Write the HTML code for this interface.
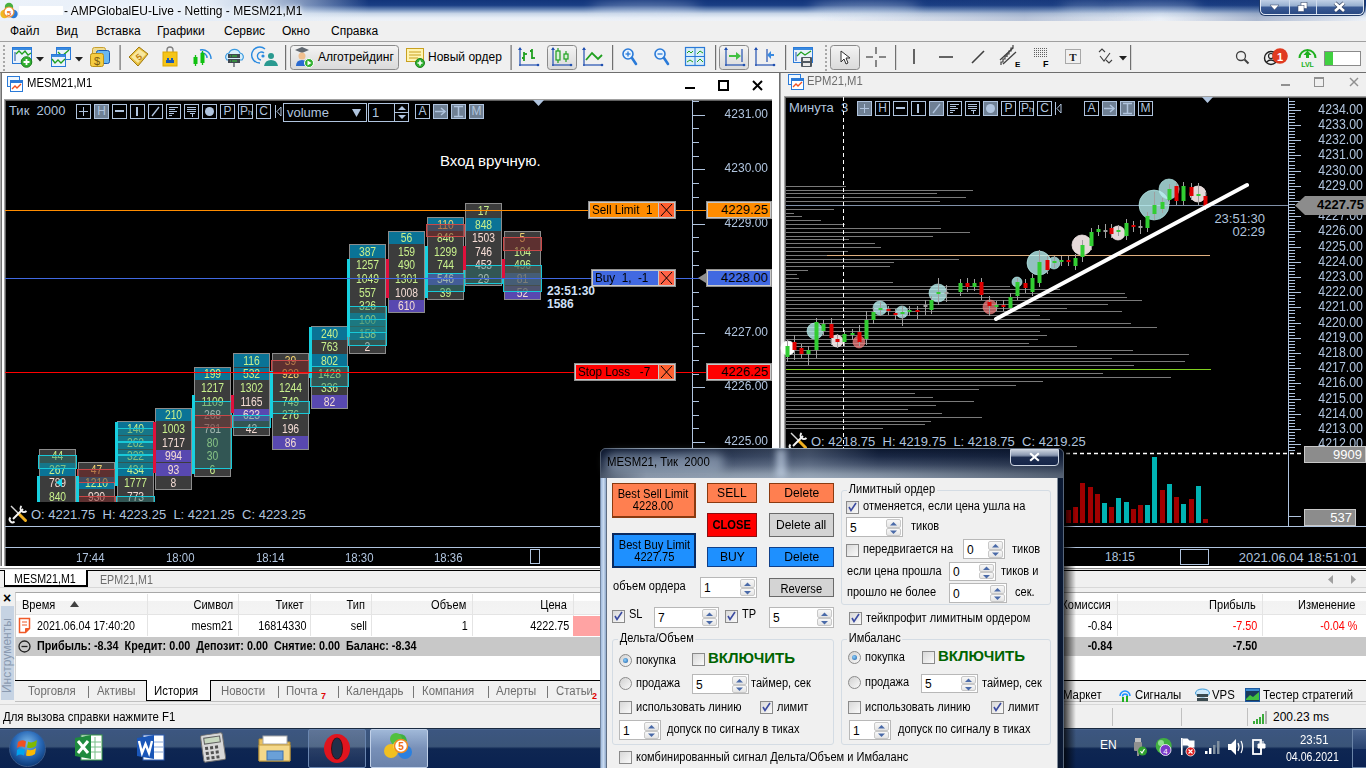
<!DOCTYPE html><html><head><meta charset="utf-8"><style>
html,body{margin:0;padding:0;width:1366px;height:768px;overflow:hidden;background:#f0f0f0;}
body{font-family:"Liberation Sans", sans-serif;font-size:12px;color:#000;position:relative;}
div{box-sizing:border-box;} svg{overflow:visible}
</style></head><body>
<div style="position:absolute;left:0px;top:0px;width:1366px;height:21px;background:linear-gradient(180deg,#12347a 0%,#1a3e84 25%,#6a88b8 45%,#c8d6e8 65%,#e8eef6 85%,#eef2f8 100%);"></div>
<div style="position:absolute;left:0px;top:0px;width:1366px;height:21px;background:linear-gradient(90deg,rgba(236,242,250,1) 0%,rgba(230,238,248,1) 15%,rgba(225,235,246,0.85) 19%,rgba(220,230,245,0.0) 27%,rgba(220,230,245,0) 100%);"></div>
<div style="position:absolute;left:0px;top:0px;width:1366px;height:21px;background:linear-gradient(90deg,rgba(0,0,0,0) 60%,rgba(40,70,130,0.25) 75%,rgba(0,0,0,0) 85%,rgba(30,60,120,0.3) 92%,rgba(0,0,0,0) 100%);"></div>
<div style="position:absolute;left:590px;top:2px;width:110px;height:14px;background:rgba(225,235,248,0.35);filter:blur(6px);border-radius:50%"></div>
<div style="position:absolute;left:810px;top:2px;width:110px;height:14px;background:rgba(225,235,248,0.4);filter:blur(6px);border-radius:50%"></div>
<div style="position:absolute;left:1060px;top:2px;width:60px;height:14px;background:rgba(225,235,248,0.25);filter:blur(6px);border-radius:50%"></div>
<div style="position:absolute;left:1110px;top:2px;width:90px;height:14px;background:rgba(225,235,248,0.35);filter:blur(6px);border-radius:50%"></div>
<div style="position:absolute;left:19px;top:6px;width:44px;height:9px;background:#fff;"></div>
<div style="position:absolute;left:64px;top:3px;white-space:nowrap;font-size:13px;color:#000;transform:scaleX(0.922);transform-origin:0 0;text-shadow:0 0 8px #fff,0 0 4px #fff;;">- AMPGlobalEU-Live - Netting - MESM21,M1</div>
<svg style="position:absolute;left:0px;top:2px;" width="19" height="18" viewBox="0 0 19 18"><circle cx="9" cy="5" r="4.2" fill="#48b040"/><circle cx="4.5" cy="12" r="4.2" fill="#f0b820"/><circle cx="13.5" cy="12" r="4.2" fill="#2a7ad8"/><circle cx="9" cy="10" r="5" fill="#fff" stroke="#f09030" stroke-width="1.2"/><text x="9" y="13.5" font-size="8" font-weight="bold" fill="#f07020" text-anchor="middle" font-family="Liberation Sans">5</text></svg>
<div style="position:absolute;left:1260px;top:-2px;width:104px;height:17px;background:linear-gradient(180deg,#c8d6ea 0%,#98b0d0 45%,#3a5a94 55%,#2a4a84 100%);border:1px solid #e0e8f4;border-radius:0 0 5px 5px;box-shadow:0 0 0 1px #203a68;"></div>
<div style="position:absolute;left:1289px;top:0px;width:1px;height:14px;background:#d0dcec"></div>
<div style="position:absolute;left:1316px;top:0px;width:1px;height:14px;background:#d0dcec"></div>
<svg style="position:absolute;left:1260px;top:0px;" width="104" height="15" viewBox="0 0 104 15"><polygon points="10,5 19,5 14.5,10" fill="#fff" stroke="#304060" stroke-width="0.5"/><rect x="41" y="2.5" width="6" height="6" fill="#fff" stroke="#304060" stroke-width="0.5"/><rect x="38" y="5.5" width="6" height="6" fill="#fff" stroke="#304060" stroke-width="0.5"/><g stroke="#304060" stroke-width="4"><line x1="75" y1="3" x2="84" y2="11"/><line x1="84" y1="3" x2="75" y2="11"/></g><g stroke="#fff" stroke-width="2.6"><line x1="75" y1="3" x2="84" y2="11"/><line x1="84" y1="3" x2="75" y2="11"/></g></svg>
<div style="position:absolute;left:0px;top:21px;width:1366px;height:20px;background:#f0f0f0;"></div>
<div style="position:absolute;left:10px;top:24px;white-space:nowrap;font-size:12px;;">Файл</div>
<div style="position:absolute;left:56px;top:24px;white-space:nowrap;font-size:12px;;">Вид</div>
<div style="position:absolute;left:96px;top:24px;white-space:nowrap;font-size:12px;;">Вставка</div>
<div style="position:absolute;left:157px;top:24px;white-space:nowrap;font-size:12px;;">Графики</div>
<div style="position:absolute;left:224px;top:24px;white-space:nowrap;font-size:12px;;">Сервис</div>
<div style="position:absolute;left:282px;top:24px;white-space:nowrap;font-size:12px;;">Окно</div>
<div style="position:absolute;left:331px;top:24px;white-space:nowrap;font-size:12px;;">Справка</div>
<div style="position:absolute;left:0px;top:41px;width:1366px;height:1px;background:#a0a0a0;"></div>
<div style="position:absolute;left:0px;top:42px;width:1366px;height:30px;background:#f0f0f0;"></div>
<div style="position:absolute;left:0px;top:72px;width:1366px;height:1px;background:#6e6e6e;"></div>
<div style="position:absolute;left:0px;top:73px;width:780px;height:496px;background:#fff;border-left:2px solid #a8a8a8;border-right:1px solid #707070;"></div>
<div style="position:absolute;left:1px;top:73px;width:1px;height:496px;background:#707070"></div>
<div style="position:absolute;left:4px;top:99px;width:768px;height:467px;background:#a0a0a0;"></div>
<div style="position:absolute;left:5px;top:100px;width:767px;height:466px;background:#606060;"></div>
<div style="position:absolute;left:6px;top:101px;width:766px;height:465px;background:#000;"></div>
<svg style="position:absolute;left:7px;top:76px;" width="16" height="16" viewBox="0 0 16 16"><rect x="0.5" y="0.5" width="12" height="10" fill="#f0f8ff" stroke="#2a7ad8"/><rect x="3.5" y="4.5" width="12" height="11" fill="#fff" stroke="#2a7ad8"/><rect x="4" y="5" width="11" height="2" fill="#2a7ad8"/><polyline points="5,13 8,10 10,12 14,8" fill="none" stroke="#f05020" stroke-width="1.3"/></svg>
<div style="position:absolute;left:27px;top:76px;white-space:nowrap;font-size:12px;;transform:scaleX(0.94);transform-origin:0 0;">MESM21,M1</div>
<div style="position:absolute;left:685px;top:87px;width:10px;height:2px;background:#000"></div>
<div style="position:absolute;left:718px;top:80px;width:11px;height:11px;border:2px solid #000;border-top-width:2px;"></div>
<svg style="position:absolute;left:752px;top:80px;" width="11" height="11" viewBox="0 0 11 11"><g stroke="#000" stroke-width="2"><line x1="1" y1="1" x2="10" y2="10"/><line x1="10" y1="1" x2="1" y2="10"/></g></svg>
<div style="position:absolute;left:780px;top:73px;width:586px;height:496px;background:#f0f0f0;border-left:1px solid #a0a0a0;"></div>
<div style="position:absolute;left:784px;top:96px;width:582px;height:470px;background:#a0a0a0;"></div>
<div style="position:absolute;left:785px;top:97px;width:581px;height:469px;background:#606060;"></div>
<div style="position:absolute;left:786px;top:98px;width:580px;height:468px;background:#000;"></div>
<svg style="position:absolute;left:788px;top:74px;" width="16" height="16" viewBox="0 0 16 16"><rect x="0.5" y="0.5" width="12" height="10" fill="#f0f8ff" stroke="#2a7ad8"/><rect x="3.5" y="4.5" width="12" height="11" fill="#fff" stroke="#2a7ad8"/><rect x="4" y="5" width="11" height="2" fill="#2a7ad8"/><polyline points="5,13 8,10 10,12 14,8" fill="none" stroke="#f05020" stroke-width="1.3"/></svg>
<div style="position:absolute;left:807px;top:74px;white-space:nowrap;font-size:12px;color:#6d6d6d;;transform:scaleX(0.94);transform-origin:0 0;">EPM21,M1</div>
<div style="position:absolute;left:1281px;top:84px;width:9px;height:2px;background:#909090"></div>
<div style="position:absolute;left:1314px;top:77px;width:10px;height:10px;border:1px solid #909090;border-top-width:2px;"></div>
<svg style="position:absolute;left:1349px;top:77px;" width="10" height="10" viewBox="0 0 10 10"><g stroke="#909090" stroke-width="1.5"><line x1="1" y1="1" x2="9" y2="9"/><line x1="9" y1="1" x2="1" y2="9"/></g></svg>
<svg style="position:absolute;left:0;top:0" width="1366" height="768"><defs><linearGradient id="gbtn" x1="0" y1="0" x2="0" y2="1"><stop offset="0" stop-color="#f4f4f4"/><stop offset="0.5" stop-color="#e6e6e6"/><stop offset="1" stop-color="#dadada"/></linearGradient></defs><rect x="3" y="45" width="2" height="2" fill="#a8a8a8"/><rect x="3" y="49" width="2" height="2" fill="#a8a8a8"/><rect x="3" y="53" width="2" height="2" fill="#a8a8a8"/><rect x="3" y="57" width="2" height="2" fill="#a8a8a8"/><rect x="3" y="61" width="2" height="2" fill="#a8a8a8"/><rect x="3" y="65" width="2" height="2" fill="#a8a8a8"/><rect x="3" y="69" width="2" height="2" fill="#a8a8a8"/><rect x="825" y="45" width="2" height="2" fill="#a8a8a8"/><rect x="825" y="49" width="2" height="2" fill="#a8a8a8"/><rect x="825" y="53" width="2" height="2" fill="#a8a8a8"/><rect x="825" y="57" width="2" height="2" fill="#a8a8a8"/><rect x="825" y="61" width="2" height="2" fill="#a8a8a8"/><rect x="825" y="65" width="2" height="2" fill="#a8a8a8"/><rect x="825" y="69" width="2" height="2" fill="#a8a8a8"/><rect x="119.5" y="45" width="1.2" height="25" fill="#707070"/><rect x="285" y="45" width="1.2" height="25" fill="#707070"/><rect x="510.5" y="45" width="1.2" height="25" fill="#707070"/><rect x="612" y="45" width="1.2" height="25" fill="#707070"/><rect x="715" y="45" width="1.2" height="25" fill="#707070"/><rect x="785" y="45" width="1.2" height="25" fill="#707070"/><rect x="895" y="45" width="1.2" height="25" fill="#707070"/><rect x="1130" y="45" width="1.2" height="25" fill="#707070"/><rect x="12.5" y="47.5" width="19" height="16" fill="#eaf2fb" stroke="#2a7ad8"/><rect x="13" y="48" width="18" height="2" fill="#3a8ae0"/><polyline points="16,54 19,51 22,54 25,51 28,55 31,53" fill="none" stroke="#20a020" stroke-width="1.3"/><line x1="15" y1="52" x2="15" y2="61" stroke="#2050a0"/><circle cx="26.5" cy="62" r="5.3" fill="#30b030" stroke="#208020"/><path d="M26.5,59 v6 M23.5,62 h6" stroke="#fff" stroke-width="1.8"/><polygon points="36,57 44,57 40,61.5" fill="#202020"/><rect x="56.5" y="47.5" width="14" height="12" fill="#eaf2fb" stroke="#2a7ad8"/><rect x="57" y="48" width="13" height="2" fill="#3a8ae0"/><polyline points="58,52 62,56 69,50" fill="none" stroke="#20a020" stroke-width="1.3"/><rect x="51.5" y="54.5" width="14" height="12" fill="#eaf2fb" stroke="#2a7ad8"/><rect x="52" y="55" width="13" height="2" fill="#3a8ae0"/><polyline points="52,59 55,63 58,60 61,63 65,59" fill="none" stroke="#20a020" stroke-width="1.3"/><polygon points="75,57 83,57 79,61.5" fill="#202020"/><rect x="92.5" y="47.5" width="13" height="10" rx="2" fill="#f0dc90" stroke="#c8a030"/><rect x="96.5" y="50.5" width="13" height="13" rx="2" fill="#6ab8f0" stroke="#1a5ab0"/><rect x="90.5" y="53.5" width="13" height="13" rx="2" fill="#f5cc40" stroke="#b8901a"/><text x="97" y="64.5" font-size="11" fill="#7a5a10" text-anchor="middle" font-family="Liberation Sans">$</text><path d="M129,57 L139,47 L148,54 L138,66 z" fill="#e8c040" stroke="#a07a10"/><path d="M131,57 L139,49 L146,54 L138,63 z" fill="#f8e8a0"/><text x="139" y="60" font-size="9" font-weight="bold" fill="#c08010" text-anchor="middle" font-family="Liberation Sans" transform="rotate(-40 139 57)">5</text><path d="M167,53 v-3 a3,3 0 0 1 6,0 v3" fill="none" stroke="#808080" stroke-width="1.3"/><rect x="163" y="52" width="14" height="14" fill="#f5c518" stroke="#e0a800"/><rect x="166" y="60" width="8" height="3" fill="#1a5ab8"/><rect x="167" y="58" width="2" height="2" fill="#1a5ab8"/><rect x="171" y="58" width="2" height="2" fill="#1a5ab8"/><g fill="none" stroke="#2a8ae0" stroke-width="1.4"><path d="M200,50 a9,9 0 0 1 11,9"/><path d="M201,53 a5,5 0 0 1 6,5"/></g><rect x="193.5" y="57" width="4" height="7" fill="#10c010"/><line x1="195.5" y1="55" x2="195.5" y2="66" stroke="#10c010" stroke-width="1.3"/><rect x="200.5" y="53" width="4" height="10" fill="#10c010"/><line x1="202.5" y1="51" x2="202.5" y2="65" stroke="#10c010" stroke-width="1.3"/><path d="M227,60 a4,4 0 0 1 2,-7 a6,6 0 0 1 11,0 a4,4 0 0 1 2,7 z" fill="#d8eefa" stroke="#3a9ae0" stroke-width="1.2"/><rect x="228" y="54" width="12" height="4" fill="#404850"/><rect x="228" y="59" width="12" height="4" fill="#404850"/><rect x="230" y="55.5" width="1" height="1" fill="#30d030"/><rect x="232" y="55.5" width="5" height="1" fill="#30d030"/><rect x="230" y="60.5" width="1" height="1" fill="#30d030"/><rect x="232" y="60.5" width="5" height="1" fill="#30d030"/><line x1="234" y1="63" x2="234" y2="67" stroke="#404850" stroke-width="1.2"/><g fill="none" stroke="#2a8ae0" stroke-width="1.4"><path d="M265,49 a8,8 0 1 0 -5,14"/><path d="M264,53 a4,4 0 1 0 -3,7"/></g><circle cx="263" cy="56" r="1.6" fill="#2a8ae0"/><circle cx="271" cy="56" r="3" fill="#2a9a90"/><path d="M264,66 q1,-6 7,-6 q6,0 7,6 z" fill="#2a9a90"/><rect x="290.5" y="45.5" width="108" height="24" rx="3" fill="url(#gbtn)" stroke="#8a8a8a"/><path d="M295,50 l7,-3 l7,3 l-7,3 z" fill="#606870"/><circle cx="302" cy="56" r="3.5" fill="#f0c090"/><path d="M296,66 q0,-6 6,-6 q6,0 6,6 z" fill="#2a6ad0"/><circle cx="309" cy="63" r="4.5" fill="#30b030" stroke="#fff" stroke-width="1"/><polygon points="307.5,60.5 307.5,65.5 311.5,63" fill="#fff"/><rect x="406.5" y="48.5" width="17" height="13" fill="#fff4b0" stroke="#c8a020"/><g stroke="#c8a020"><line x1="409" y1="52" x2="421" y2="52"/><line x1="409" y1="55" x2="421" y2="55"/><line x1="409" y1="58" x2="418" y2="58"/></g><circle cx="420" cy="63" r="4.5" fill="#30b030" stroke="#208020"/><path d="M420,60.5 v5 M417.5,63 h5" stroke="#fff" stroke-width="1.6"/><g stroke="#2050b0" stroke-width="1.2"><line x1="520" y1="48" x2="520" y2="66"/><line x1="519" y1="65" x2="538" y2="65"/></g><polygon points="518,50 520,47 522,50" fill="#2050b0"/><circle cx="538" cy="65" r="1.3" fill="#2050b0"/><g stroke="#20a020" stroke-width="1.8"><line x1="524" y1="52" x2="524" y2="61"/><line x1="522" y1="58" x2="524" y2="58"/><line x1="524" y1="54" x2="527" y2="54"/><line x1="532" y1="49" x2="532" y2="59"/><line x1="530" y1="51" x2="532" y2="51"/><line x1="532" y1="58" x2="535" y2="58"/></g><rect x="547.5" y="45.5" width="29" height="24" rx="3" fill="url(#gbtn)" stroke="#8a8a8a"/><g stroke="#2050b0" stroke-width="1.2"><line x1="553" y1="48" x2="553" y2="66"/><line x1="552" y1="65" x2="571" y2="65"/></g><polygon points="551,50 553,47 555,50" fill="#2050b0"/><circle cx="571" cy="65" r="1.3" fill="#2050b0"/><g stroke="#20a020" stroke-width="1.2" fill="none"><line x1="558" y1="48" x2="558" y2="63"/><rect x="556" y="51" width="4" height="9" fill="#d8f0d8"/><line x1="566" y1="51" x2="566" y2="62"/><rect x="564" y="54" width="4" height="5" fill="#d8f0d8"/></g><g stroke="#2050b0" stroke-width="1.2"><line x1="584" y1="48" x2="584" y2="66"/><line x1="583" y1="65" x2="602" y2="65"/></g><polygon points="582,50 584,47 586,50" fill="#2050b0"/><circle cx="602" cy="65" r="1.3" fill="#2050b0"/><polyline points="586,60 592,53 598,59 602,55" fill="none" stroke="#20a020" stroke-width="1.8"/><circle cx="628" cy="54" r="5" fill="#e8f4ff" stroke="#2a7ad8" stroke-width="1.6"/><line x1="632" y1="58" x2="636" y2="64" stroke="#2a7ad8" stroke-width="2.6" stroke-linecap="round"/><line x1="625.5" y1="54" x2="630.5" y2="54" stroke="#2a7ad8" stroke-width="1.3"/><line x1="628" y1="51.5" x2="628" y2="56.5" stroke="#2a7ad8" stroke-width="1.3"/><circle cx="660" cy="54" r="5" fill="#e8f4ff" stroke="#2a7ad8" stroke-width="1.6"/><line x1="664" y1="58" x2="668" y2="64" stroke="#2a7ad8" stroke-width="2.6" stroke-linecap="round"/><line x1="657.5" y1="54" x2="662.5" y2="54" stroke="#2a7ad8" stroke-width="1.3"/><rect x="685.5" y="47.5" width="19" height="18" fill="#d8eef8" stroke="#2a7ad8" stroke-width="1.2"/><line x1="695" y1="47" x2="695" y2="66" stroke="#2a7ad8"/><line x1="685" y1="56.5" x2="705" y2="56.5" stroke="#2a7ad8"/><g fill="none" stroke="#20a020"><polyline points="687,53 689,51 691,53 693,51"/><polyline points="697,54 700,51 703,53"/><polyline points="687,62 690,60 693,62"/><polyline points="697,62 700,59 703,62"/></g><rect x="719.5" y="45.5" width="29" height="24" rx="3" fill="url(#gbtn)" stroke="#8a8a8a"/><g stroke="#2050b0" stroke-width="1.2"><line x1="726" y1="48" x2="726" y2="66"/><line x1="725" y1="65" x2="744" y2="65"/></g><polygon points="724,50 726,47 728,50" fill="#2050b0"/><circle cx="744" cy="65" r="1.3" fill="#2050b0"/><line x1="742" y1="49" x2="742" y2="62" stroke="#2050b0" stroke-width="1.2"/><path d="M729,55 h7 v-3 l5,4 l-5,4 v-3 h-7z" fill="#40c040"/><g stroke="#2050b0" stroke-width="1.2"><line x1="756" y1="48" x2="756" y2="66"/><line x1="755" y1="65" x2="774" y2="65"/></g><polygon points="754,50 756,47 758,50" fill="#2050b0"/><circle cx="774" cy="65" r="1.3" fill="#2050b0"/><line x1="767" y1="49" x2="767" y2="62" stroke="#2050b0" stroke-width="1.2"/><path d="M774,54 h-3 v-3 l-4,4 l4,4 v-3 h3z" fill="#3a8ae0"/><rect x="793.5" y="47.5" width="19" height="15" fill="#eaf2fb" stroke="#2a7ad8"/><rect x="794" y="48" width="18" height="2" fill="#3a8ae0"/><polyline points="797,56 801,52 805,55 811,51" fill="none" stroke="#20a020" stroke-width="1.3"/><line x1="796" y1="52" x2="796" y2="61" stroke="#2050b0"/><rect x="801" y="57" width="11" height="10" rx="1" fill="#505860"/><rect x="803" y="58" width="7" height="3" fill="#e8e8e8"/><rect x="803" y="63" width="7" height="3" fill="#e8e8e8"/><rect x="830.5" y="45.5" width="29" height="24" rx="3" fill="url(#gbtn)" stroke="#8a8a8a"/><path d="M841,51 L841,62 L844,59 L846,64 L848,63 L846,58 L850,58 z" fill="#fff" stroke="#303030" stroke-width="1"/><g stroke="#404040" stroke-width="1.2"><line x1="866" y1="57" x2="873" y2="57"/><line x1="879" y1="57" x2="886" y2="57"/><line x1="876" y1="47" x2="876" y2="54"/><line x1="876" y1="60" x2="876" y2="67"/></g><line x1="914" y1="49" x2="914" y2="64" stroke="#404040" stroke-width="1.6"/><line x1="939" y1="57" x2="953" y2="57" stroke="#404040" stroke-width="1.6"/><line x1="972" y1="63" x2="984" y2="51" stroke="#404040" stroke-width="1.6"/><g stroke="#404040" stroke-width="1.2" fill="none"><path d="M1001,65 v-3 h2 v-3 h2 v-3 h2"/><path d="M1007,57 v-3 h2 v-3 h2 v-3 h2 v-3"/><line x1="1000" y1="60" x2="1013" y2="48"/><line x1="1003" y1="64" x2="1016" y2="52"/></g><text x="1015" y="67" font-size="8" font-weight="bold" fill="#000" font-family="Liberation Sans">E</text><g fill="#606060"><rect x="1034" y="48" width="1" height="1"/><rect x="1034" y="50" width="1" height="1"/><rect x="1034" y="52" width="1" height="1"/><rect x="1034" y="54" width="1" height="1"/><rect x="1034" y="56" width="1" height="1"/><rect x="1036" y="48" width="1" height="1"/><rect x="1036" y="50" width="1" height="1"/><rect x="1036" y="52" width="1" height="1"/><rect x="1036" y="54" width="1" height="1"/><rect x="1036" y="56" width="1" height="1"/><rect x="1038" y="48" width="1" height="1"/><rect x="1038" y="50" width="1" height="1"/><rect x="1038" y="52" width="1" height="1"/><rect x="1038" y="54" width="1" height="1"/><rect x="1038" y="56" width="1" height="1"/><rect x="1040" y="48" width="1" height="1"/><rect x="1040" y="50" width="1" height="1"/><rect x="1040" y="52" width="1" height="1"/><rect x="1040" y="54" width="1" height="1"/><rect x="1040" y="56" width="1" height="1"/><rect x="1042" y="48" width="1" height="1"/><rect x="1042" y="50" width="1" height="1"/><rect x="1042" y="52" width="1" height="1"/><rect x="1042" y="54" width="1" height="1"/><rect x="1042" y="56" width="1" height="1"/><rect x="1044" y="48" width="1" height="1"/><rect x="1044" y="50" width="1" height="1"/><rect x="1044" y="52" width="1" height="1"/><rect x="1044" y="54" width="1" height="1"/><rect x="1044" y="56" width="1" height="1"/><rect x="1046" y="48" width="1" height="1"/><rect x="1046" y="50" width="1" height="1"/><rect x="1046" y="52" width="1" height="1"/><rect x="1046" y="54" width="1" height="1"/><rect x="1046" y="56" width="1" height="1"/></g><text x="1043" y="67" font-size="9" font-weight="bold" fill="#000" font-family="Liberation Sans">F</text><rect x="1065.5" y="49.5" width="15" height="14" fill="none" stroke="#606060" stroke-dasharray="1,1"/><text x="1073" y="61" font-size="11" font-weight="bold" fill="#202020" text-anchor="middle" font-family="Liberation Serif">T</text><g stroke="#404040" stroke-width="1.1" fill="none"><polyline points="1099,52 1102,49 1105,52"/><polyline points="1100,56 1104,61 1110,53"/><polyline points="1106,60 1109,63 1112,60"/></g><polygon points="1119,56 1127,56 1123,60.5" fill="#202020"/><circle cx="1241" cy="56" r="4.5" fill="none" stroke="#404040" stroke-width="1.3"/><line x1="1244.5" y1="59.5" x2="1248.5" y2="63.5" stroke="#404040" stroke-width="2"/><circle cx="1271" cy="58" r="6.5" fill="none" stroke="#202020" stroke-width="1.4"/><circle cx="1271" cy="56" r="2.5" fill="none" stroke="#202020" stroke-width="1.2"/><path d="M1266.5,62 q4.5,-4 9,0" fill="none" stroke="#202020" stroke-width="1.2"/><circle cx="1280" cy="56" r="7.8" fill="#e03a20"/><text x="1280" y="60.5" font-size="11" font-weight="bold" fill="#fff" text-anchor="middle" font-family="Liberation Sans">1</text><path d="M1299.5,58 a8,8 0 0 1 16,0" fill="none" stroke="#20b020" stroke-width="2"/><polygon points="1303.5,55 1307.5,50.5 1311.5,55" fill="#20b020"/><rect x="1306" y="54" width="3" height="4" fill="#20b020"/><text x="1307.5" y="66.5" font-size="7" font-weight="bold" fill="#20b020" text-anchor="middle" font-family="Liberation Sans">LVL</text><rect x="1324.5" y="51.5" width="36" height="14" fill="#fff" stroke="#8a8a8a"/><rect x="1325" y="52" width="8" height="13" fill="#40d040"/></svg>
<div style="position:absolute;left:318px;top:50px;white-space:nowrap;font-size:12px;;">Алготрейдинг</div>
<div style="position:absolute;left:428px;top:50px;white-space:nowrap;font-size:12px;;">Новый ордер</div>
<div style="position:absolute;left:9px;top:103px;white-space:nowrap;font-size:13px;color:#b0c4de;;">Тик&nbsp; 2000</div>
<div style="position:absolute;left:76px;top:104px;width:15px;height:15px;border:1px solid #b0c4de;"><div style="position:absolute;left:2px;top:6px;width:9px;height:1px;background:#b0c4de"></div><div style="position:absolute;left:6px;top:2px;width:1px;height:9px;background:#b0c4de"></div></div>
<div style="position:absolute;left:94px;top:104px;width:15px;height:15px;border:1px solid #b0c4de;background:#6f8094;"><div style="position:absolute;left:0;top:-1px;width:13px;text-align:center;font-size:12px;line-height:15px;color:#b0c4de">H</div></div>
<div style="position:absolute;left:112px;top:104px;width:15px;height:15px;border:1px solid #b0c4de;"><div style="position:absolute;left:2px;top:5px;width:9px;height:2px;background:#b0c4de"></div></div>
<div style="position:absolute;left:130px;top:104px;width:15px;height:15px;border:1px solid #b0c4de;"><div style="position:absolute;left:5px;top:2px;width:2px;height:9px;background:#b0c4de"></div></div>
<div style="position:absolute;left:148px;top:104px;width:15px;height:15px;border:1px solid #b0c4de;"><svg width="13" height="13" style="position:absolute;left:0;top:0"><line x1="3" y1="11" x2="10" y2="2" stroke="#b0c4de" stroke-width="1.3"/></svg></div>
<div style="position:absolute;left:166px;top:104px;width:15px;height:15px;border:1px solid #b0c4de;"><svg width="13" height="13" style="position:absolute;left:0;top:0"><g stroke="#b0c4de" stroke-width="1"><line x1="2" y1="2.5" x2="11" y2="2.5"/><line x1="2" y1="4.5" x2="8" y2="4.5"/><line x1="2" y1="6.5" x2="10" y2="6.5"/><line x1="2" y1="8.5" x2="7" y2="8.5"/><line x1="2" y1="10.5" x2="5" y2="10.5"/></g></svg></div>
<div style="position:absolute;left:184px;top:104px;width:15px;height:15px;border:1px solid #b0c4de;"><svg width="13" height="13" style="position:absolute;left:0;top:0"><g stroke="#b0c4de" stroke-width="1"><line x1="2" y1="2.5" x2="11" y2="2.5"/><line x1="2" y1="4.5" x2="11" y2="4.5"/><line x1="2" y1="6.5" x2="11" y2="6.5"/><line x1="5" y1="8.5" x2="10" y2="8.5"/><line x1="7.5" y1="8" x2="7.5" y2="12"/></g></svg></div>
<div style="position:absolute;left:202px;top:104px;width:15px;height:15px;border:1px solid #b0c4de;"><div style="position:absolute;left:2px;top:2px;width:9px;height:9px;border-radius:50%;background:#b0c4de"></div></div>
<div style="position:absolute;left:220px;top:104px;width:15px;height:15px;border:1px solid #b0c4de;"><div style="position:absolute;left:0;top:-1px;width:13px;text-align:center;font-size:12px;line-height:15px;color:#b0c4de">P</div></div>
<div style="position:absolute;left:238px;top:104px;width:15px;height:15px;border:1px solid #b0c4de;"><div style="position:absolute;left:1px;top:-1px;font-size:12px;line-height:15px;color:#b0c4de">P<span style="font-size:8px">h</span></div></div>
<div style="position:absolute;left:256px;top:104px;width:15px;height:15px;border:1px solid #b0c4de;"><div style="position:absolute;left:0;top:-1px;width:13px;text-align:center;font-size:12px;line-height:15px;color:#b0c4de">C</div></div>
<div style="position:absolute;left:275px;top:105px;width:1px;height:13px;background:#b0c4de"></div>
<svg style="position:absolute;left:277px;top:107px;" width="5" height="9" viewBox="0 0 5 9"><polygon points="4,0 4,9 0,4.5" fill="none" stroke="#b0c4de"/></svg>
<div style="position:absolute;left:283px;top:103px;width:84px;height:19px;border:1px solid #b0c4de;"><div style="position:absolute;left:3px;top:1px;font-size:13px;color:#b0c4de">volume</div><svg width="10" height="8" style="position:absolute;left:68px;top:5px"><polygon points="0,0 9,0 4.5,8" fill="#b0c4de"/></svg></div>
<div style="position:absolute;left:368px;top:103px;width:41px;height:19px;border:1px solid #b0c4de;"><div style="position:absolute;left:3px;top:1px;font-size:13px;color:#b0c4de">1</div><div style="position:absolute;left:25px;top:0;width:1px;height:17px;background:#b0c4de"></div><div style="position:absolute;left:26px;top:8px;width:14px;height:1px;background:#b0c4de"></div><svg width="14" height="17" style="position:absolute;left:26px;top:0"><polygon points="3,6 7,2 11,6" fill="#b0c4de"/><polygon points="3,11 7,15 11,11" fill="#b0c4de"/></svg></div>
<div style="position:absolute;left:415px;top:104px;width:15px;height:15px;border:1px solid #b0c4de;"><div style="position:absolute;left:0;top:-1px;width:13px;text-align:center;font-size:12px;line-height:15px;color:#b0c4de">A</div></div>
<div style="position:absolute;left:433px;top:104px;width:15px;height:15px;border:1px solid #b0c4de;background:#6f8094;"><svg width="13" height="13" style="position:absolute;left:0;top:0"><g stroke="#b0c4de" stroke-width="1.5" fill="none"><line x1="1" y1="6.5" x2="11" y2="6.5"/><polyline points="7,3 11,6.5 7,10"/></g></svg></div>
<div style="position:absolute;left:451px;top:104px;width:15px;height:15px;border:1px solid #b0c4de;background:#6f8094;"><svg width="13" height="13" style="position:absolute;left:0;top:0"><g stroke="#b0c4de" stroke-width="1.5" fill="none"><line x1="2" y1="1.5" x2="11" y2="1.5"/><line x1="2" y1="11.5" x2="11" y2="11.5"/><line x1="6.5" y1="1" x2="6.5" y2="12"/></g></svg></div>
<div style="position:absolute;left:469px;top:104px;width:15px;height:15px;border:1px solid #b0c4de;background:#6f8094;"><div style="position:absolute;left:0;top:-1px;width:13px;text-align:center;font-size:12px;line-height:15px;color:#b0c4de">M</div></div>
<svg style="position:absolute;left:533px;top:100px;" width="11" height="6" viewBox="0 0 11 6"><polygon points="0,0 11,0 5.5,6" fill="#b0c4de"/></svg>
<div style="position:absolute;left:692px;top:100px;width:1px;height:447px;background:#b0c4de"></div>
<div style="position:absolute;left:693px;top:101px;width:6px;height:1px;background:#b0c4de"></div>
<div style="position:absolute;left:693px;top:115px;width:12px;height:1px;background:#b0c4de"></div>
<div style="position:absolute;right:598px;top:107px;white-space:nowrap;font-size:12px;color:#b0c4de;transform:scaleY(1.1);;">4231.00</div>
<div style="position:absolute;left:693px;top:128px;width:6px;height:1px;background:#b0c4de"></div>
<div style="position:absolute;left:693px;top:142px;width:6px;height:1px;background:#b0c4de"></div>
<div style="position:absolute;left:693px;top:156px;width:6px;height:1px;background:#b0c4de"></div>
<div style="position:absolute;left:693px;top:169px;width:12px;height:1px;background:#b0c4de"></div>
<div style="position:absolute;right:598px;top:161px;white-space:nowrap;font-size:12px;color:#b0c4de;transform:scaleY(1.1);;">4230.00</div>
<div style="position:absolute;left:693px;top:183px;width:6px;height:1px;background:#b0c4de"></div>
<div style="position:absolute;left:693px;top:197px;width:6px;height:1px;background:#b0c4de"></div>
<div style="position:absolute;left:693px;top:210px;width:6px;height:1px;background:#b0c4de"></div>
<div style="position:absolute;left:693px;top:224px;width:12px;height:1px;background:#b0c4de"></div>
<div style="position:absolute;right:598px;top:216px;white-space:nowrap;font-size:12px;color:#b0c4de;transform:scaleY(1.1);;">4229.00</div>
<div style="position:absolute;left:693px;top:237px;width:6px;height:1px;background:#b0c4de"></div>
<div style="position:absolute;left:693px;top:251px;width:6px;height:1px;background:#b0c4de"></div>
<div style="position:absolute;left:693px;top:265px;width:6px;height:1px;background:#b0c4de"></div>
<div style="position:absolute;left:693px;top:278px;width:12px;height:1px;background:#b0c4de"></div>
<div style="position:absolute;right:598px;top:270px;white-space:nowrap;font-size:12px;color:#b0c4de;transform:scaleY(1.1);;">4228.00</div>
<div style="position:absolute;left:693px;top:292px;width:6px;height:1px;background:#b0c4de"></div>
<div style="position:absolute;left:693px;top:306px;width:6px;height:1px;background:#b0c4de"></div>
<div style="position:absolute;left:693px;top:319px;width:6px;height:1px;background:#b0c4de"></div>
<div style="position:absolute;left:693px;top:333px;width:12px;height:1px;background:#b0c4de"></div>
<div style="position:absolute;right:598px;top:325px;white-space:nowrap;font-size:12px;color:#b0c4de;transform:scaleY(1.1);;">4227.00</div>
<div style="position:absolute;left:693px;top:346px;width:6px;height:1px;background:#b0c4de"></div>
<div style="position:absolute;left:693px;top:360px;width:6px;height:1px;background:#b0c4de"></div>
<div style="position:absolute;left:693px;top:374px;width:6px;height:1px;background:#b0c4de"></div>
<div style="position:absolute;left:693px;top:387px;width:12px;height:1px;background:#b0c4de"></div>
<div style="position:absolute;right:598px;top:379px;white-space:nowrap;font-size:12px;color:#b0c4de;transform:scaleY(1.1);;">4226.00</div>
<div style="position:absolute;left:693px;top:401px;width:6px;height:1px;background:#b0c4de"></div>
<div style="position:absolute;left:693px;top:415px;width:6px;height:1px;background:#b0c4de"></div>
<div style="position:absolute;left:693px;top:428px;width:6px;height:1px;background:#b0c4de"></div>
<div style="position:absolute;left:693px;top:442px;width:12px;height:1px;background:#b0c4de"></div>
<div style="position:absolute;right:598px;top:434px;white-space:nowrap;font-size:12px;color:#b0c4de;transform:scaleY(1.1);;">4225.00</div>
<div style="position:absolute;left:693px;top:455px;width:6px;height:1px;background:#b0c4de"></div>
<div style="position:absolute;left:693px;top:469px;width:6px;height:1px;background:#b0c4de"></div>
<div style="position:absolute;left:693px;top:483px;width:6px;height:1px;background:#b0c4de"></div>
<div style="position:absolute;left:693px;top:496px;width:12px;height:1px;background:#b0c4de"></div>
<div style="position:absolute;right:598px;top:488px;white-space:nowrap;font-size:12px;color:#b0c4de;transform:scaleY(1.1);;">4224.00</div>
<div style="position:absolute;left:440px;top:152px;white-space:nowrap;font-size:15px;color:#fff;;">Вход вручную.</div>
<div style="position:absolute;left:5px;top:100px;width:687px;height:402px;overflow:hidden">
<div style="position:absolute;left:34px;top:348.6px;width:37px;height:55.5px;background:#3c3c3c;border:1px solid #8c8c8c;"></div>
<div style="position:absolute;left:35px;top:363.2px;width:35px;height:12.6px;background:#0a7396"></div>
<div style="position:absolute;left:73px;top:362.2px;width:37px;height:41.9px;background:#3c3c3c;border:1px solid #8c8c8c;"></div>
<div style="position:absolute;left:74px;top:376.9px;width:35px;height:12.6px;background:#0a7396"></div>
<div style="position:absolute;left:112px;top:321.4px;width:37px;height:82.8px;background:#3c3c3c;border:1px solid #8c8c8c;"></div>
<div style="position:absolute;left:113px;top:322.4px;width:35px;height:12.6px;background:#0a7396"></div>
<div style="position:absolute;left:113px;top:336.0px;width:35px;height:12.6px;background:#0a7396"></div>
<div style="position:absolute;left:113px;top:349.6px;width:35px;height:12.6px;background:#0a7396"></div>
<div style="position:absolute;left:113px;top:363.2px;width:35px;height:12.6px;background:#0a7396"></div>
<div style="position:absolute;left:150px;top:307.7px;width:37px;height:82.8px;background:#3c3c3c;border:1px solid #8c8c8c;"></div>
<div style="position:absolute;left:151px;top:308.7px;width:35px;height:12.6px;background:#0a7396"></div>
<div style="position:absolute;left:151px;top:349.6px;width:35px;height:12.6px;background:#5848b0"></div>
<div style="position:absolute;left:151px;top:363.2px;width:35px;height:12.6px;background:#5848b0"></div>
<div style="position:absolute;left:189px;top:266.9px;width:37px;height:110.0px;background:#3c3c3c;border:1px solid #8c8c8c;"></div>
<div style="position:absolute;left:190px;top:267.9px;width:35px;height:12.6px;background:#0a7396"></div>
<div style="position:absolute;left:228px;top:253.2px;width:37px;height:82.8px;background:#3c3c3c;border:1px solid #8c8c8c;"></div>
<div style="position:absolute;left:229px;top:254.2px;width:35px;height:12.6px;background:#0a7396"></div>
<div style="position:absolute;left:229px;top:267.9px;width:35px;height:12.6px;background:#0a7396"></div>
<div style="position:absolute;left:229px;top:308.7px;width:35px;height:12.6px;background:#5848b0"></div>
<div style="position:absolute;left:267px;top:253.2px;width:37px;height:96.4px;background:#3c3c3c;border:1px solid #8c8c8c;"></div>
<div style="position:absolute;left:268px;top:336.0px;width:35px;height:12.6px;background:#5848b0"></div>
<div style="position:absolute;left:306px;top:226.0px;width:37px;height:82.8px;background:#3c3c3c;border:1px solid #8c8c8c;"></div>
<div style="position:absolute;left:307px;top:227.0px;width:35px;height:12.6px;background:#0a7396"></div>
<div style="position:absolute;left:307px;top:254.2px;width:35px;height:12.6px;background:#0a7396"></div>
<div style="position:absolute;left:307px;top:295.1px;width:35px;height:12.6px;background:#5848b0"></div>
<div style="position:absolute;left:344px;top:144.2px;width:37px;height:110.0px;background:#3c3c3c;border:1px solid #8c8c8c;"></div>
<div style="position:absolute;left:345px;top:145.2px;width:35px;height:12.6px;background:#0a7396"></div>
<div style="position:absolute;left:345px;top:213.4px;width:35px;height:12.6px;background:#0a7396"></div>
<div style="position:absolute;left:345px;top:227.0px;width:35px;height:12.6px;background:#0a7396"></div>
<div style="position:absolute;left:383px;top:130.6px;width:37px;height:82.8px;background:#3c3c3c;border:1px solid #8c8c8c;"></div>
<div style="position:absolute;left:384px;top:131.6px;width:35px;height:12.6px;background:#0a7396"></div>
<div style="position:absolute;left:384px;top:199.7px;width:35px;height:12.6px;background:#5848b0"></div>
<div style="position:absolute;left:422px;top:117.0px;width:37px;height:82.8px;background:#3c3c3c;border:1px solid #8c8c8c;"></div>
<div style="position:absolute;left:423px;top:118.0px;width:35px;height:12.6px;background:#0a7396"></div>
<div style="position:absolute;left:423px;top:172.5px;width:35px;height:12.6px;background:#5848b0"></div>
<div style="position:absolute;left:460px;top:103.4px;width:37px;height:82.8px;background:#3c3c3c;border:1px solid #8c8c8c;"></div>
<div style="position:absolute;left:461px;top:118.0px;width:35px;height:12.6px;background:#0a7396"></div>
<div style="position:absolute;left:499px;top:130.6px;width:37px;height:69.1px;background:#3c3c3c;border:1px solid #8c8c8c;"></div>
<div style="position:absolute;left:500px;top:172.5px;width:35px;height:12.6px;background:#3a6ac8"></div>
<div style="position:absolute;left:500px;top:186.1px;width:35px;height:12.6px;background:#5848b0"></div>
<div style="position:absolute;left:34px;top:348.1px;width:37px;text-align:center;font-size:12px;line-height:16px;color:#c8f08c;transform:scaleX(0.86)">44</div>
<div style="position:absolute;left:34px;top:361.7px;width:37px;text-align:center;font-size:12px;line-height:16px;color:#c8f08c;transform:scaleX(0.86)">267</div>
<div style="position:absolute;left:34px;top:375.4px;width:37px;text-align:center;font-size:12px;line-height:16px;color:#f4dcd4;transform:scaleX(0.86)">789</div>
<div style="position:absolute;left:34px;top:389.0px;width:37px;text-align:center;font-size:12px;line-height:16px;color:#c8f08c;transform:scaleX(0.86)">840</div>
<div style="position:absolute;left:73px;top:361.7px;width:37px;text-align:center;font-size:12px;line-height:16px;color:#f0d070;transform:scaleX(0.86)">47</div>
<div style="position:absolute;left:73px;top:375.4px;width:37px;text-align:center;font-size:12px;line-height:16px;color:#c8f08c;transform:scaleX(0.86)">1210</div>
<div style="position:absolute;left:73px;top:389.0px;width:37px;text-align:center;font-size:12px;line-height:16px;color:#f4dcd4;transform:scaleX(0.86)">930</div>
<div style="position:absolute;left:112px;top:320.9px;width:37px;text-align:center;font-size:12px;line-height:16px;color:#c8f08c;transform:scaleX(0.86)">140</div>
<div style="position:absolute;left:112px;top:334.5px;width:37px;text-align:center;font-size:12px;line-height:16px;color:#c8f08c;transform:scaleX(0.86)">262</div>
<div style="position:absolute;left:112px;top:348.1px;width:37px;text-align:center;font-size:12px;line-height:16px;color:#c8f08c;transform:scaleX(0.86)">322</div>
<div style="position:absolute;left:112px;top:361.7px;width:37px;text-align:center;font-size:12px;line-height:16px;color:#c8f08c;transform:scaleX(0.86)">434</div>
<div style="position:absolute;left:112px;top:375.4px;width:37px;text-align:center;font-size:12px;line-height:16px;color:#c8f08c;transform:scaleX(0.86)">1777</div>
<div style="position:absolute;left:112px;top:389.0px;width:37px;text-align:center;font-size:12px;line-height:16px;color:#f4dcd4;transform:scaleX(0.86)">773</div>
<div style="position:absolute;left:150px;top:307.2px;width:37px;text-align:center;font-size:12px;line-height:16px;color:#c8f08c;transform:scaleX(0.86)">210</div>
<div style="position:absolute;left:150px;top:320.9px;width:37px;text-align:center;font-size:12px;line-height:16px;color:#c8f08c;transform:scaleX(0.86)">1003</div>
<div style="position:absolute;left:150px;top:334.5px;width:37px;text-align:center;font-size:12px;line-height:16px;color:#f4dcd4;transform:scaleX(0.86)">1717</div>
<div style="position:absolute;left:150px;top:348.1px;width:37px;text-align:center;font-size:12px;line-height:16px;color:#f4dcd4;transform:scaleX(0.86)">994</div>
<div style="position:absolute;left:150px;top:361.7px;width:37px;text-align:center;font-size:12px;line-height:16px;color:#f4dcd4;transform:scaleX(0.86)">93</div>
<div style="position:absolute;left:150px;top:375.4px;width:37px;text-align:center;font-size:12px;line-height:16px;color:#f4dcd4;transform:scaleX(0.86)">8</div>
<div style="position:absolute;left:189px;top:266.4px;width:37px;text-align:center;font-size:12px;line-height:16px;color:#c8f08c;transform:scaleX(0.86)">199</div>
<div style="position:absolute;left:189px;top:280.0px;width:37px;text-align:center;font-size:12px;line-height:16px;color:#c8f08c;transform:scaleX(0.86)">1217</div>
<div style="position:absolute;left:189px;top:293.6px;width:37px;text-align:center;font-size:12px;line-height:16px;color:#c8f08c;transform:scaleX(0.86)">1109</div>
<div style="position:absolute;left:189px;top:307.2px;width:37px;text-align:center;font-size:12px;line-height:16px;color:#f4dcd4;transform:scaleX(0.86)">268</div>
<div style="position:absolute;left:189px;top:320.9px;width:37px;text-align:center;font-size:12px;line-height:16px;color:#f4dcd4;transform:scaleX(0.86)">781</div>
<div style="position:absolute;left:189px;top:334.5px;width:37px;text-align:center;font-size:12px;line-height:16px;color:#c8f08c;transform:scaleX(0.86)">80</div>
<div style="position:absolute;left:189px;top:348.1px;width:37px;text-align:center;font-size:12px;line-height:16px;color:#c8f08c;transform:scaleX(0.86)">30</div>
<div style="position:absolute;left:189px;top:361.7px;width:37px;text-align:center;font-size:12px;line-height:16px;color:#c8f08c;transform:scaleX(0.86)">6</div>
<div style="position:absolute;left:228px;top:252.7px;width:37px;text-align:center;font-size:12px;line-height:16px;color:#c8f08c;transform:scaleX(0.86)">116</div>
<div style="position:absolute;left:228px;top:266.4px;width:37px;text-align:center;font-size:12px;line-height:16px;color:#c8f08c;transform:scaleX(0.86)">532</div>
<div style="position:absolute;left:228px;top:280.0px;width:37px;text-align:center;font-size:12px;line-height:16px;color:#c8f08c;transform:scaleX(0.86)">1302</div>
<div style="position:absolute;left:228px;top:293.6px;width:37px;text-align:center;font-size:12px;line-height:16px;color:#f4dcd4;transform:scaleX(0.86)">1165</div>
<div style="position:absolute;left:228px;top:307.2px;width:37px;text-align:center;font-size:12px;line-height:16px;color:#f4dcd4;transform:scaleX(0.86)">623</div>
<div style="position:absolute;left:228px;top:320.9px;width:37px;text-align:center;font-size:12px;line-height:16px;color:#f4dcd4;transform:scaleX(0.86)">42</div>
<div style="position:absolute;left:267px;top:252.7px;width:37px;text-align:center;font-size:12px;line-height:16px;color:#f0d070;transform:scaleX(0.86)">39</div>
<div style="position:absolute;left:267px;top:266.4px;width:37px;text-align:center;font-size:12px;line-height:16px;color:#f0d070;transform:scaleX(0.86)">928</div>
<div style="position:absolute;left:267px;top:280.0px;width:37px;text-align:center;font-size:12px;line-height:16px;color:#c8f08c;transform:scaleX(0.86)">1244</div>
<div style="position:absolute;left:267px;top:293.6px;width:37px;text-align:center;font-size:12px;line-height:16px;color:#c8f08c;transform:scaleX(0.86)">749</div>
<div style="position:absolute;left:267px;top:307.2px;width:37px;text-align:center;font-size:12px;line-height:16px;color:#c8f08c;transform:scaleX(0.86)">276</div>
<div style="position:absolute;left:267px;top:320.9px;width:37px;text-align:center;font-size:12px;line-height:16px;color:#f4dcd4;transform:scaleX(0.86)">196</div>
<div style="position:absolute;left:267px;top:334.5px;width:37px;text-align:center;font-size:12px;line-height:16px;color:#f4dcd4;transform:scaleX(0.86)">86</div>
<div style="position:absolute;left:306px;top:225.5px;width:37px;text-align:center;font-size:12px;line-height:16px;color:#c8f08c;transform:scaleX(0.86)">240</div>
<div style="position:absolute;left:306px;top:239.1px;width:37px;text-align:center;font-size:12px;line-height:16px;color:#c8f08c;transform:scaleX(0.86)">763</div>
<div style="position:absolute;left:306px;top:252.7px;width:37px;text-align:center;font-size:12px;line-height:16px;color:#c8f08c;transform:scaleX(0.86)">802</div>
<div style="position:absolute;left:306px;top:266.4px;width:37px;text-align:center;font-size:12px;line-height:16px;color:#c8f08c;transform:scaleX(0.86)">1428</div>
<div style="position:absolute;left:306px;top:280.0px;width:37px;text-align:center;font-size:12px;line-height:16px;color:#c8f08c;transform:scaleX(0.86)">336</div>
<div style="position:absolute;left:306px;top:293.6px;width:37px;text-align:center;font-size:12px;line-height:16px;color:#f4dcd4;transform:scaleX(0.86)">82</div>
<div style="position:absolute;left:344px;top:143.7px;width:37px;text-align:center;font-size:12px;line-height:16px;color:#c8f08c;transform:scaleX(0.86)">387</div>
<div style="position:absolute;left:344px;top:157.4px;width:37px;text-align:center;font-size:12px;line-height:16px;color:#c8f08c;transform:scaleX(0.86)">1257</div>
<div style="position:absolute;left:344px;top:171.0px;width:37px;text-align:center;font-size:12px;line-height:16px;color:#c8f08c;transform:scaleX(0.86)">1049</div>
<div style="position:absolute;left:344px;top:184.6px;width:37px;text-align:center;font-size:12px;line-height:16px;color:#c8f08c;transform:scaleX(0.86)">557</div>
<div style="position:absolute;left:344px;top:198.2px;width:37px;text-align:center;font-size:12px;line-height:16px;color:#c8f08c;transform:scaleX(0.86)">326</div>
<div style="position:absolute;left:344px;top:211.9px;width:37px;text-align:center;font-size:12px;line-height:16px;color:#c8f08c;transform:scaleX(0.86)">100</div>
<div style="position:absolute;left:344px;top:225.5px;width:37px;text-align:center;font-size:12px;line-height:16px;color:#c8f08c;transform:scaleX(0.86)">158</div>
<div style="position:absolute;left:344px;top:239.1px;width:37px;text-align:center;font-size:12px;line-height:16px;color:#f4dcd4;transform:scaleX(0.86)">2</div>
<div style="position:absolute;left:383px;top:130.1px;width:37px;text-align:center;font-size:12px;line-height:16px;color:#c8f08c;transform:scaleX(0.86)">56</div>
<div style="position:absolute;left:383px;top:143.7px;width:37px;text-align:center;font-size:12px;line-height:16px;color:#c8f08c;transform:scaleX(0.86)">159</div>
<div style="position:absolute;left:383px;top:157.4px;width:37px;text-align:center;font-size:12px;line-height:16px;color:#c8f08c;transform:scaleX(0.86)">490</div>
<div style="position:absolute;left:383px;top:171.0px;width:37px;text-align:center;font-size:12px;line-height:16px;color:#c8f08c;transform:scaleX(0.86)">1301</div>
<div style="position:absolute;left:383px;top:184.6px;width:37px;text-align:center;font-size:12px;line-height:16px;color:#f4dcd4;transform:scaleX(0.86)">1008</div>
<div style="position:absolute;left:383px;top:198.2px;width:37px;text-align:center;font-size:12px;line-height:16px;color:#f4dcd4;transform:scaleX(0.86)">610</div>
<div style="position:absolute;left:422px;top:116.5px;width:37px;text-align:center;font-size:12px;line-height:16px;color:#f0d070;transform:scaleX(0.86)">110</div>
<div style="position:absolute;left:422px;top:130.1px;width:37px;text-align:center;font-size:12px;line-height:16px;color:#c8f08c;transform:scaleX(0.86)">846</div>
<div style="position:absolute;left:422px;top:143.7px;width:37px;text-align:center;font-size:12px;line-height:16px;color:#c8f08c;transform:scaleX(0.86)">1299</div>
<div style="position:absolute;left:422px;top:157.4px;width:37px;text-align:center;font-size:12px;line-height:16px;color:#c8f08c;transform:scaleX(0.86)">744</div>
<div style="position:absolute;left:422px;top:171.0px;width:37px;text-align:center;font-size:12px;line-height:16px;color:#f4dcd4;transform:scaleX(0.86)">546</div>
<div style="position:absolute;left:422px;top:184.6px;width:37px;text-align:center;font-size:12px;line-height:16px;color:#c8f08c;transform:scaleX(0.86)">39</div>
<div style="position:absolute;left:460px;top:102.9px;width:37px;text-align:center;font-size:12px;line-height:16px;color:#c8f08c;transform:scaleX(0.86)">17</div>
<div style="position:absolute;left:460px;top:116.5px;width:37px;text-align:center;font-size:12px;line-height:16px;color:#c8f08c;transform:scaleX(0.86)">848</div>
<div style="position:absolute;left:460px;top:130.1px;width:37px;text-align:center;font-size:12px;line-height:16px;color:#f4dcd4;transform:scaleX(0.86)">1503</div>
<div style="position:absolute;left:460px;top:143.7px;width:37px;text-align:center;font-size:12px;line-height:16px;color:#f4dcd4;transform:scaleX(0.86)">746</div>
<div style="position:absolute;left:460px;top:157.4px;width:37px;text-align:center;font-size:12px;line-height:16px;color:#f4dcd4;transform:scaleX(0.86)">453</div>
<div style="position:absolute;left:460px;top:171.0px;width:37px;text-align:center;font-size:12px;line-height:16px;color:#f4dcd4;transform:scaleX(0.86)">29</div>
<div style="position:absolute;left:499px;top:130.1px;width:37px;text-align:center;font-size:12px;line-height:16px;color:#f0d070;transform:scaleX(0.86)">5</div>
<div style="position:absolute;left:499px;top:143.7px;width:37px;text-align:center;font-size:12px;line-height:16px;color:#c8f08c;transform:scaleX(0.86)">104</div>
<div style="position:absolute;left:499px;top:157.4px;width:37px;text-align:center;font-size:12px;line-height:16px;color:#c8f08c;transform:scaleX(0.86)">496</div>
<div style="position:absolute;left:499px;top:171.0px;width:37px;text-align:center;font-size:12px;line-height:16px;color:#f4dcd4;transform:scaleX(0.86)">81</div>
<div style="position:absolute;left:499px;top:184.6px;width:37px;text-align:center;font-size:12px;line-height:16px;color:#f4dcd4;transform:scaleX(0.86)">52</div>
<div style="position:absolute;left:33px;top:355.4px;width:39px;height:13.6px;background:rgba(38,125,118,0.42);border:1px solid #18c8d8;"></div>
<div style="position:absolute;left:72px;top:369.1px;width:39px;height:13.6px;background:rgba(125,35,35,0.5);border:1px solid #c84848;"></div>
<div style="position:absolute;left:72px;top:396.3px;width:39px;height:10.9px;background:rgba(125,35,35,0.5);border:1px solid #c84848;"></div>
<div style="position:absolute;left:111px;top:328.2px;width:39px;height:13.6px;background:rgba(38,125,118,0.42);border:1px solid #18c8d8;"></div>
<div style="position:absolute;left:111px;top:341.8px;width:39px;height:13.6px;background:rgba(38,125,118,0.42);border:1px solid #18c8d8;"></div>
<div style="position:absolute;left:111px;top:355.4px;width:39px;height:13.6px;background:rgba(38,125,118,0.42);border:1px solid #18c8d8;"></div>
<div style="position:absolute;left:111px;top:396.3px;width:39px;height:10.9px;background:rgba(38,125,118,0.42);border:1px solid #18c8d8;"></div>
<div style="position:absolute;left:188px;top:300.9px;width:39px;height:68.1px;background:rgba(38,125,118,0.42);border:1px solid #18c8d8;"></div>
<div style="position:absolute;left:188px;top:314.6px;width:39px;height:13.6px;background:rgba(125,35,35,0.5);border:1px solid #c84848;"></div>
<div style="position:absolute;left:227px;top:314.6px;width:39px;height:13.6px;background:rgba(38,125,118,0.42);border:1px solid #18c8d8;"></div>
<div style="position:absolute;left:266px;top:260.1px;width:39px;height:13.6px;background:rgba(125,35,35,0.5);border:1px solid #c84848;"></div>
<div style="position:absolute;left:266px;top:300.9px;width:39px;height:13.6px;background:rgba(38,125,118,0.42);border:1px solid #18c8d8;"></div>
<div style="position:absolute;left:305px;top:265.5px;width:39px;height:21.8px;background:rgba(38,125,118,0.42);border:1px solid #18c8d8;"></div>
<div style="position:absolute;left:343px;top:205.6px;width:39px;height:40.9px;background:rgba(38,125,118,0.42);border:1px solid #18c8d8;"></div>
<div style="position:absolute;left:343px;top:219.2px;width:39px;height:13.6px;background:rgba(38,125,118,0.42);border:1px solid #18c8d8;"></div>
<div style="position:absolute;left:421px;top:123.8px;width:39px;height:13.6px;background:rgba(125,35,35,0.5);border:1px solid #c84848;"></div>
<div style="position:absolute;left:421px;top:172.8px;width:39px;height:19.1px;background:rgba(38,125,118,0.42);border:1px solid #18c8d8;"></div>
<div style="position:absolute;left:459px;top:164.7px;width:39px;height:19.1px;background:rgba(38,125,118,0.42);border:1px solid #18c8d8;"></div>
<div style="position:absolute;left:498px;top:137.4px;width:39px;height:13.6px;background:rgba(125,35,35,0.5);border:1px solid #c84848;"></div>
<div style="position:absolute;left:498px;top:164.7px;width:39px;height:27.2px;background:rgba(125,35,35,0.5);border:1px solid #c84848;"></div>
<div style="position:absolute;left:498px;top:164.7px;width:39px;height:27.2px;background:rgba(38,125,118,0.42);border:1px solid #18c8d8;"></div>
<div style="position:absolute;left:32px;top:376.0px;width:3px;height:34.0px;background:#18d0e0"></div>
<div style="position:absolute;left:71px;top:376.0px;width:3px;height:34.0px;background:#18d0e0"></div>
<div style="position:absolute;left:110px;top:322.0px;width:3px;height:64.0px;background:#18d0e0"></div>
<div style="position:absolute;left:148px;top:322.0px;width:3px;height:51.0px;background:#e0103c"></div>
<div style="position:absolute;left:187px;top:295.0px;width:3px;height:79.0px;background:#18d0e0"></div>
<div style="position:absolute;left:226px;top:295.0px;width:3px;height:18.0px;background:#e0103c"></div>
<div style="position:absolute;left:265px;top:271.0px;width:3px;height:47.0px;background:#18d0e0"></div>
<div style="position:absolute;left:304px;top:226.5px;width:3px;height:51.5px;background:#18d0e0"></div>
<div style="position:absolute;left:342px;top:159.0px;width:3px;height:78.0px;background:#18d0e0"></div>
<div style="position:absolute;left:381px;top:159.0px;width:3px;height:38.5px;background:#e0103c"></div>
<div style="position:absolute;left:420px;top:146.0px;width:3px;height:51.5px;background:#18d0e0"></div>
<div style="position:absolute;left:458px;top:146.0px;width:3px;height:24.0px;background:#e0103c"></div>
<div style="position:absolute;left:497px;top:159.0px;width:3px;height:20.0px;background:#e0103c"></div>
<svg style="position:absolute;left:51px;top:378px" width="6" height="9"><polygon points="6,0 6,9 0,4.5" fill="#18d8f0"/></svg>
</div>
<div style="position:absolute;left:5px;top:210px;width:767px;height:1px;background:#ff8c00"></div>
<div style="position:absolute;left:5px;top:278px;width:767px;height:1px;background:#4169e1"></div>
<div style="position:absolute;left:5px;top:372px;width:767px;height:1px;background:#ff0000"></div>
<div style="position:absolute;left:588px;top:201px;width:88px;height:18px;background:#c8c8c8;border:1px solid #909090;"></div>
<div style="position:absolute;left:590px;top:203px;width:68px;height:14px;background:#ff8c00;"><div style="position:absolute;left:2px;top:-1px;font-size:13px;line-height:15px;color:#000;white-space:pre;transform:scaleX(0.9);transform-origin:0 0">Sell Limit  1</div></div>
<div style="position:absolute;left:659px;top:203px;width:15px;height:14px;background:#ff6030;"><svg width="15" height="14" style="position:absolute;left:0;top:0"><g stroke="#000" stroke-width="1"><line x1="2" y1="1" x2="13" y2="13"/><line x1="13" y1="1" x2="2" y2="13"/></g></svg></div>
<div style="position:absolute;left:706px;top:201px;width:66px;height:18px;background:#c8c8c8;border:1px solid #909090;"></div>
<div style="position:absolute;left:708px;top:203px;width:62px;height:14px;background:#ff8c00"><div style="position:absolute;right:2px;top:-1px;font-size:13px;line-height:15px;color:#000">4229.25</div></div>
<div style="position:absolute;left:591px;top:269px;width:85px;height:18px;background:#c8c8c8;border:1px solid #909090;"></div>
<div style="position:absolute;left:593px;top:271px;width:65px;height:14px;background:#4169e1;"><div style="position:absolute;left:2px;top:-1px;font-size:13px;line-height:15px;color:#000;white-space:pre;transform:scaleX(0.9);transform-origin:0 0">Buy  1,  -1</div></div>
<div style="position:absolute;left:659px;top:271px;width:15px;height:14px;background:#ff6347;"><svg width="15" height="14" style="position:absolute;left:0;top:0"><g stroke="#000" stroke-width="1"><line x1="2" y1="1" x2="13" y2="13"/><line x1="13" y1="1" x2="2" y2="13"/></g></svg></div>
<svg style="position:absolute;left:698px;top:273px;" width="8" height="10" viewBox="0 0 8 10"><polygon points="8,0 8,10 0,5" fill="#909090"/></svg>
<div style="position:absolute;left:706px;top:269px;width:66px;height:18px;background:#c8c8c8;border:1px solid #909090;"></div>
<div style="position:absolute;left:708px;top:271px;width:62px;height:14px;background:#4169e1"><div style="position:absolute;right:2px;top:-1px;font-size:13px;line-height:15px;color:#000">4228.00</div></div>
<div style="position:absolute;left:574px;top:363px;width:102px;height:18px;background:#c8c8c8;border:1px solid #909090;"></div>
<div style="position:absolute;left:576px;top:365px;width:82px;height:14px;background:#ff0000;"><div style="position:absolute;left:2px;top:-1px;font-size:13px;line-height:15px;color:#000;white-space:pre;transform:scaleX(0.9);transform-origin:0 0">Stop Loss   -7</div></div>
<div style="position:absolute;left:659px;top:365px;width:15px;height:14px;background:#ff6030;"><svg width="15" height="14" style="position:absolute;left:0;top:0"><g stroke="#000" stroke-width="1"><line x1="2" y1="1" x2="13" y2="13"/><line x1="13" y1="1" x2="2" y2="13"/></g></svg></div>
<div style="position:absolute;left:706px;top:363px;width:66px;height:18px;background:#c8c8c8;border:1px solid #909090;"></div>
<div style="position:absolute;left:708px;top:365px;width:62px;height:14px;background:#ff0000"><div style="position:absolute;right:2px;top:-1px;font-size:13px;line-height:15px;color:#000">4226.25</div></div>
<div style="position:absolute;left:547px;top:285px;white-space:nowrap;font-size:12px;line-height:13px;font-weight:bold;color:#d0e0f8;;">23:51:30<br>1586</div>
<div style="position:absolute;left:9px;top:504px;width:20px;height:20px;"><svg width="20" height="20" style="position:absolute;left:0;top:0"><line x1="2" y1="2" x2="10" y2="10" stroke="#d8d8d8" stroke-width="1.4"/><line x1="10" y1="10" x2="16.5" y2="16.5" stroke="#f0b020" stroke-width="3" stroke-linecap="round"/><line x1="4" y1="15" x2="14" y2="5" stroke="#f4f4f4" stroke-width="2"/><path d="M12.5,2 a3,3 0 1 0 5,5" fill="none" stroke="#f4f4f4" stroke-width="1.8"/><path d="M1.5,13.5 a2.6,2.6 0 1 0 4,4" fill="none" stroke="#f4f4f4" stroke-width="1.8"/></svg></div>
<div style="position:absolute;left:31px;top:507px;white-space:nowrap;font-size:13px;color:#b0c4de;">O: 4221.75&nbsp; H: 4223.25&nbsp; L: 4221.25&nbsp; C: 4223.25</div>
<div style="position:absolute;left:5px;top:526px;width:767px;height:1px;background:#b0c4de"></div>
<div style="position:absolute;left:5px;top:547px;width:767px;height:1px;background:#b0c4de"></div>
<div style="position:absolute;left:76px;top:551px;white-space:nowrap;font-size:12px;color:#b0c4de;transform:scaleX(0.95);transform-origin:0 0;">17:44</div>
<div style="position:absolute;left:166px;top:551px;white-space:nowrap;font-size:12px;color:#b0c4de;transform:scaleX(0.95);transform-origin:0 0;">18:00</div>
<div style="position:absolute;left:256px;top:551px;white-space:nowrap;font-size:12px;color:#b0c4de;transform:scaleX(0.95);transform-origin:0 0;">18:14</div>
<div style="position:absolute;left:345px;top:551px;white-space:nowrap;font-size:12px;color:#b0c4de;transform:scaleX(0.95);transform-origin:0 0;">18:30</div>
<div style="position:absolute;left:434px;top:551px;white-space:nowrap;font-size:12px;color:#b0c4de;transform:scaleX(0.95);transform-origin:0 0;">18:36</div>
<div style="position:absolute;left:530px;top:549px;width:10px;height:15px;border:1px solid #b0c4de"></div>
<div style="position:absolute;left:789px;top:100px;white-space:nowrap;font-size:13px;color:#b0c4de;;">Минута&nbsp; 3</div>
<div style="position:absolute;left:857px;top:101px;width:15px;height:15px;border:1px solid #b0c4de;background:#6f8094;"><div style="position:absolute;left:2px;top:6px;width:9px;height:1px;background:#b0c4de"></div><div style="position:absolute;left:6px;top:2px;width:1px;height:9px;background:#b0c4de"></div></div>
<div style="position:absolute;left:875px;top:101px;width:15px;height:15px;border:1px solid #b0c4de;"><div style="position:absolute;left:0;top:-1px;width:13px;text-align:center;font-size:12px;line-height:15px;color:#b0c4de">H</div></div>
<div style="position:absolute;left:893px;top:101px;width:15px;height:15px;border:1px solid #b0c4de;"><div style="position:absolute;left:2px;top:5px;width:9px;height:2px;background:#b0c4de"></div></div>
<div style="position:absolute;left:911px;top:101px;width:15px;height:15px;border:1px solid #b0c4de;"><div style="position:absolute;left:5px;top:2px;width:2px;height:9px;background:#b0c4de"></div></div>
<div style="position:absolute;left:929px;top:101px;width:15px;height:15px;border:1px solid #b0c4de;background:#6f8094;"><svg width="13" height="13" style="position:absolute;left:0;top:0"><line x1="3" y1="11" x2="10" y2="2" stroke="#b0c4de" stroke-width="1.3"/></svg></div>
<div style="position:absolute;left:947px;top:101px;width:15px;height:15px;border:1px solid #b0c4de;"><svg width="13" height="13" style="position:absolute;left:0;top:0"><g stroke="#b0c4de" stroke-width="1"><line x1="2" y1="2.5" x2="11" y2="2.5"/><line x1="2" y1="4.5" x2="8" y2="4.5"/><line x1="2" y1="6.5" x2="10" y2="6.5"/><line x1="2" y1="8.5" x2="7" y2="8.5"/><line x1="2" y1="10.5" x2="5" y2="10.5"/></g></svg></div>
<div style="position:absolute;left:965px;top:101px;width:15px;height:15px;border:1px solid #b0c4de;"><svg width="13" height="13" style="position:absolute;left:0;top:0"><g stroke="#b0c4de" stroke-width="1"><line x1="2" y1="2.5" x2="11" y2="2.5"/><line x1="2" y1="4.5" x2="11" y2="4.5"/><line x1="2" y1="6.5" x2="11" y2="6.5"/><line x1="5" y1="8.5" x2="10" y2="8.5"/><line x1="7.5" y1="8" x2="7.5" y2="12"/></g></svg></div>
<div style="position:absolute;left:983px;top:101px;width:15px;height:15px;border:1px solid #b0c4de;background:#6f8094;"><div style="position:absolute;left:2px;top:2px;width:9px;height:9px;border-radius:50%;background:#b0c4de"></div></div>
<div style="position:absolute;left:1001px;top:101px;width:15px;height:15px;border:1px solid #b0c4de;"><div style="position:absolute;left:0;top:-1px;width:13px;text-align:center;font-size:12px;line-height:15px;color:#b0c4de">P</div></div>
<div style="position:absolute;left:1019px;top:101px;width:15px;height:15px;border:1px solid #b0c4de;"><div style="position:absolute;left:1px;top:-1px;font-size:12px;line-height:15px;color:#b0c4de">P<span style="font-size:8px">h</span></div></div>
<div style="position:absolute;left:1037px;top:101px;width:15px;height:15px;border:1px solid #b0c4de;"><div style="position:absolute;left:0;top:-1px;width:13px;text-align:center;font-size:12px;line-height:15px;color:#b0c4de">C</div></div>
<div style="position:absolute;left:1055px;top:102px;width:1px;height:13px;background:#b0c4de"></div>
<svg style="position:absolute;left:1057px;top:104px;" width="5" height="9" viewBox="0 0 5 9"><polygon points="4,0 4,9 0,4.5" fill="none" stroke="#b0c4de"/></svg>
<div style="position:absolute;left:1084px;top:101px;width:15px;height:15px;border:1px solid #b0c4de;"><div style="position:absolute;left:0;top:-1px;width:13px;text-align:center;font-size:12px;line-height:15px;color:#b0c4de">A</div></div>
<div style="position:absolute;left:1102px;top:101px;width:15px;height:15px;border:1px solid #b0c4de;background:#6f8094;"><svg width="13" height="13" style="position:absolute;left:0;top:0"><g stroke="#b0c4de" stroke-width="1.5" fill="none"><line x1="1" y1="6.5" x2="11" y2="6.5"/><polyline points="7,3 11,6.5 7,10"/></g></svg></div>
<div style="position:absolute;left:1120px;top:101px;width:15px;height:15px;border:1px solid #b0c4de;background:#6f8094;"><svg width="13" height="13" style="position:absolute;left:0;top:0"><g stroke="#b0c4de" stroke-width="1.5" fill="none"><line x1="2" y1="1.5" x2="11" y2="1.5"/><line x1="2" y1="11.5" x2="11" y2="11.5"/><line x1="6.5" y1="1" x2="6.5" y2="12"/></g></svg></div>
<div style="position:absolute;left:1138px;top:101px;width:15px;height:15px;border:1px solid #b0c4de;"><div style="position:absolute;left:0;top:-1px;width:13px;text-align:center;font-size:12px;line-height:15px;color:#b0c4de">M</div></div>
<svg style="position:absolute;left:1202px;top:97px;" width="11" height="6" viewBox="0 0 11 6"><polygon points="0,0 11,0 5.5,6" fill="#b0c4de"/></svg>
<svg style="position:absolute;left:0;top:0" width="1366" height="768"><line x1="786" y1="186.5" x2="846" y2="186.5" stroke="#7a7a7a" stroke-width="1"/><line x1="786" y1="190.5" x2="973" y2="190.5" stroke="#7a7a7a" stroke-width="1"/><line x1="786" y1="193.5" x2="937" y2="193.5" stroke="#7a7a7a" stroke-width="1"/><line x1="786" y1="197.5" x2="966" y2="197.5" stroke="#7a7a7a" stroke-width="1"/><line x1="786" y1="201.5" x2="940" y2="201.5" stroke="#7a7a7a" stroke-width="1"/><line x1="786" y1="209.5" x2="834" y2="209.5" stroke="#7a7a7a" stroke-width="1"/><line x1="786" y1="213.5" x2="794" y2="213.5" stroke="#7a7a7a" stroke-width="1"/><line x1="786" y1="216.5" x2="802" y2="216.5" stroke="#7a7a7a" stroke-width="1"/><line x1="786" y1="220.5" x2="821" y2="220.5" stroke="#7a7a7a" stroke-width="1"/><line x1="786" y1="224.5" x2="845" y2="224.5" stroke="#7a7a7a" stroke-width="1"/><line x1="786" y1="228.5" x2="941" y2="228.5" stroke="#7a7a7a" stroke-width="1"/><line x1="786" y1="232.5" x2="970" y2="232.5" stroke="#7a7a7a" stroke-width="1"/><line x1="786" y1="236.5" x2="933" y2="236.5" stroke="#7a7a7a" stroke-width="1"/><line x1="786" y1="239.5" x2="849" y2="239.5" stroke="#7a7a7a" stroke-width="1"/><line x1="786" y1="243.5" x2="875" y2="243.5" stroke="#7a7a7a" stroke-width="1"/><line x1="786" y1="247.5" x2="881" y2="247.5" stroke="#7a7a7a" stroke-width="1"/><line x1="786" y1="251.5" x2="848" y2="251.5" stroke="#7a7a7a" stroke-width="1"/><line x1="786" y1="255.5" x2="827" y2="255.5" stroke="#7a7a7a" stroke-width="1"/><line x1="786" y1="259.5" x2="959" y2="259.5" stroke="#7a7a7a" stroke-width="1"/><line x1="786" y1="262.5" x2="894" y2="262.5" stroke="#7a7a7a" stroke-width="1"/><line x1="786" y1="266.5" x2="890" y2="266.5" stroke="#7a7a7a" stroke-width="1"/><line x1="786" y1="270.5" x2="808" y2="270.5" stroke="#7a7a7a" stroke-width="1"/><line x1="786" y1="274.5" x2="797" y2="274.5" stroke="#7a7a7a" stroke-width="1"/><line x1="786" y1="278.5" x2="799" y2="278.5" stroke="#7a7a7a" stroke-width="1"/><line x1="786" y1="282.5" x2="893" y2="282.5" stroke="#7a7a7a" stroke-width="1"/><line x1="786" y1="286.5" x2="1010" y2="286.5" stroke="#7a7a7a" stroke-width="1"/><line x1="786" y1="289.5" x2="1060" y2="289.5" stroke="#7a7a7a" stroke-width="1"/><line x1="786" y1="293.5" x2="1125" y2="293.5" stroke="#7a7a7a" stroke-width="1"/><line x1="786" y1="297.5" x2="1127" y2="297.5" stroke="#7a7a7a" stroke-width="1"/><line x1="786" y1="300.5" x2="1142" y2="300.5" stroke="#7a7a7a" stroke-width="1"/><line x1="786" y1="304.5" x2="1108" y2="304.5" stroke="#7a7a7a" stroke-width="1"/><line x1="786" y1="308.5" x2="1067" y2="308.5" stroke="#7a7a7a" stroke-width="1"/><line x1="786" y1="311.5" x2="1122" y2="311.5" stroke="#7a7a7a" stroke-width="1"/><line x1="786" y1="315.5" x2="1040" y2="315.5" stroke="#7a7a7a" stroke-width="1"/><line x1="786" y1="319.5" x2="1050" y2="319.5" stroke="#7a7a7a" stroke-width="1"/><line x1="786" y1="323.5" x2="1131" y2="323.5" stroke="#7a7a7a" stroke-width="1"/><line x1="786" y1="327.5" x2="1157" y2="327.5" stroke="#7a7a7a" stroke-width="1"/><line x1="786" y1="331.5" x2="1040" y2="331.5" stroke="#7a7a7a" stroke-width="1"/><line x1="786" y1="335.5" x2="1047" y2="335.5" stroke="#7a7a7a" stroke-width="1"/><line x1="786" y1="339.5" x2="1038" y2="339.5" stroke="#7a7a7a" stroke-width="1"/><line x1="786" y1="343.5" x2="1029" y2="343.5" stroke="#7a7a7a" stroke-width="1"/><line x1="786" y1="346.5" x2="1077" y2="346.5" stroke="#7a7a7a" stroke-width="1"/><line x1="786" y1="350.5" x2="1133" y2="350.5" stroke="#7a7a7a" stroke-width="1"/><line x1="786" y1="354.5" x2="1189" y2="354.5" stroke="#7a7a7a" stroke-width="1"/><line x1="786" y1="358.5" x2="1112" y2="358.5" stroke="#7a7a7a" stroke-width="1"/><line x1="786" y1="361.5" x2="1185" y2="361.5" stroke="#7a7a7a" stroke-width="1"/><line x1="786" y1="365.5" x2="1134" y2="365.5" stroke="#7a7a7a" stroke-width="1"/><line x1="786" y1="373.5" x2="1103" y2="373.5" stroke="#7a7a7a" stroke-width="1"/><line x1="786" y1="377.5" x2="1171" y2="377.5" stroke="#7a7a7a" stroke-width="1"/><line x1="786" y1="381.5" x2="1043" y2="381.5" stroke="#7a7a7a" stroke-width="1"/><line x1="786" y1="385.5" x2="1016" y2="385.5" stroke="#7a7a7a" stroke-width="1"/><line x1="786" y1="389.5" x2="979" y2="389.5" stroke="#7a7a7a" stroke-width="1"/><line x1="786" y1="393.5" x2="915" y2="393.5" stroke="#7a7a7a" stroke-width="1"/><line x1="786" y1="397.5" x2="933" y2="397.5" stroke="#7a7a7a" stroke-width="1"/><line x1="786" y1="401.5" x2="974" y2="401.5" stroke="#7a7a7a" stroke-width="1"/><line x1="786" y1="405.5" x2="936" y2="405.5" stroke="#7a7a7a" stroke-width="1"/><line x1="786" y1="409.5" x2="908" y2="409.5" stroke="#7a7a7a" stroke-width="1"/><line x1="786" y1="413.5" x2="942" y2="413.5" stroke="#7a7a7a" stroke-width="1"/><line x1="786" y1="417.5" x2="982" y2="417.5" stroke="#7a7a7a" stroke-width="1"/><line x1="786" y1="421.5" x2="931" y2="421.5" stroke="#7a7a7a" stroke-width="1"/><line x1="786" y1="424.5" x2="925" y2="424.5" stroke="#7a7a7a" stroke-width="1"/><line x1="786" y1="428.5" x2="883" y2="428.5" stroke="#7a7a7a" stroke-width="1"/><line x1="786" y1="205.5" x2="1288" y2="205.5" stroke="#8090a8" stroke-width="1"/><line x1="827" y1="255.5" x2="1210" y2="255.5" stroke="#e0b080" stroke-width="1"/><line x1="786" y1="369.5" x2="1211" y2="369.5" stroke="#80d020" stroke-width="1"/><line x1="843.5" y1="97" x2="843.5" y2="452" stroke="#fff" stroke-width="1" stroke-dasharray="4,3"/></svg>
<svg style="position:absolute;left:0;top:0" width="1366" height="768"><circle cx="788" cy="348" r="7" fill="#fff" stroke="#fff" stroke-width="0.8"/><circle cx="815" cy="331" r="8" fill="rgba(185,240,240,0.8)" stroke="rgba(185,240,240,0.8)" stroke-width="0.8"/><circle cx="837" cy="341" r="6" fill="rgba(248,236,236,0.92)" stroke="rgba(248,236,236,0.92)" stroke-width="0.8"/><circle cx="859" cy="342" r="6" fill="rgba(240,128,128,0.75)" stroke="rgba(240,128,128,0.75)" stroke-width="0.8"/><circle cx="880" cy="308" r="7" fill="rgba(185,240,240,0.8)" stroke="rgba(185,240,240,0.8)" stroke-width="0.8"/><circle cx="902" cy="312" r="6" fill="rgba(185,240,240,0.8)" stroke="rgba(185,240,240,0.8)" stroke-width="0.8"/><circle cx="938" cy="293" r="9" fill="rgba(185,240,240,0.8)" stroke="rgba(185,240,240,0.8)" stroke-width="0.8"/><circle cx="990" cy="307" r="7" fill="rgba(240,128,128,0.75)" stroke="rgba(240,128,128,0.75)" stroke-width="0.8"/><circle cx="1017" cy="282" r="5" fill="rgba(185,240,240,0.8)" stroke="rgba(185,240,240,0.8)" stroke-width="0.8"/><circle cx="1039" cy="263" r="12" fill="rgba(185,240,240,0.8)" stroke="rgba(185,240,240,0.8)" stroke-width="0.8"/><circle cx="1054" cy="263" r="6" fill="rgba(185,240,240,0.8)" stroke="rgba(185,240,240,0.8)" stroke-width="0.8"/><circle cx="1082" cy="245" r="10" fill="rgba(248,236,236,0.92)" stroke="rgba(248,236,236,0.92)" stroke-width="0.8"/><circle cx="1118" cy="233" r="7" fill="rgba(248,236,236,0.92)" stroke="rgba(248,236,236,0.92)" stroke-width="0.8"/><circle cx="1154" cy="205" r="15" fill="rgba(185,240,240,0.8)" stroke="rgba(185,240,240,0.8)" stroke-width="0.8"/><circle cx="1169" cy="189" r="10" fill="rgba(185,240,240,0.8)" stroke="rgba(185,240,240,0.8)" stroke-width="0.8"/><circle cx="1198" cy="194" r="8" fill="rgba(248,236,236,0.92)" stroke="rgba(248,236,236,0.92)" stroke-width="0.8"/><line x1="787.5" y1="340" x2="787.5" y2="362" stroke="#a0a0a0" stroke-width="1"/><rect x="785.5" y="346" width="4" height="11" fill="#32cd32"/><line x1="794.5" y1="335" x2="794.5" y2="360" stroke="#a0a0a0" stroke-width="1"/><rect x="792.5" y="342" width="4" height="8" fill="#e00000"/><line x1="801.5" y1="344" x2="801.5" y2="358" stroke="#a0a0a0" stroke-width="1"/><rect x="799.5" y="348" width="4" height="6" fill="#e00000"/><line x1="808.5" y1="346" x2="808.5" y2="365" stroke="#a0a0a0" stroke-width="1"/><rect x="806.5" y="350" width="4" height="4" fill="#32cd32"/><line x1="816.5" y1="318" x2="816.5" y2="358" stroke="#a0a0a0" stroke-width="1"/><rect x="814.5" y="322" width="4" height="28" fill="#32cd32"/><line x1="823.5" y1="320" x2="823.5" y2="335" stroke="#a0a0a0" stroke-width="1"/><rect x="821.5" y="324" width="4" height="7" fill="#32cd32"/><line x1="831.5" y1="318" x2="831.5" y2="345" stroke="#a0a0a0" stroke-width="1"/><rect x="829.5" y="324" width="4" height="14" fill="#e00000"/><line x1="837.5" y1="334" x2="837.5" y2="348" stroke="#a0a0a0" stroke-width="1"/><rect x="835.5" y="339" width="4" height="3" fill="#e00000"/><line x1="844.5" y1="330" x2="844.5" y2="346" stroke="#a0a0a0" stroke-width="1"/><rect x="842.5" y="334" width="4" height="8" fill="#32cd32"/><line x1="852.5" y1="329" x2="852.5" y2="340" stroke="#a0a0a0" stroke-width="1"/><rect x="850.5" y="333" width="4" height="2" fill="#32cd32"/><line x1="859.5" y1="325" x2="859.5" y2="346" stroke="#a0a0a0" stroke-width="1"/><rect x="857.5" y="332" width="4" height="10" fill="#e00000"/><line x1="866.5" y1="311" x2="866.5" y2="345" stroke="#a0a0a0" stroke-width="1"/><rect x="864.5" y="320" width="4" height="19" fill="#32cd32"/><line x1="873.5" y1="308" x2="873.5" y2="324" stroke="#a0a0a0" stroke-width="1"/><rect x="871.5" y="312" width="4" height="8" fill="#32cd32"/><line x1="880.5" y1="302" x2="880.5" y2="316" stroke="#a0a0a0" stroke-width="1"/><rect x="878.5" y="308" width="4" height="2" fill="#32cd32"/><line x1="888.5" y1="306" x2="888.5" y2="315" stroke="#a0a0a0" stroke-width="1"/><rect x="886.5" y="309" width="4" height="2" fill="#e00000"/><line x1="895.5" y1="309" x2="895.5" y2="320" stroke="#a0a0a0" stroke-width="1"/><rect x="893.5" y="313" width="4" height="2" fill="#e00000"/><line x1="902.5" y1="306" x2="902.5" y2="326" stroke="#a0a0a0" stroke-width="1"/><rect x="900.5" y="312" width="4" height="2" fill="#32cd32"/><line x1="909.5" y1="306" x2="909.5" y2="316" stroke="#a0a0a0" stroke-width="1"/><rect x="907.5" y="310" width="4" height="2" fill="#32cd32"/><line x1="917.5" y1="306" x2="917.5" y2="319" stroke="#a0a0a0" stroke-width="1"/><rect x="915.5" y="310" width="4" height="2" fill="#e00000"/><line x1="925.5" y1="300" x2="925.5" y2="315" stroke="#a0a0a0" stroke-width="1"/><rect x="923.5" y="305" width="4" height="2" fill="#a0a0a0"/><line x1="931.5" y1="296" x2="931.5" y2="314" stroke="#a0a0a0" stroke-width="1"/><rect x="929.5" y="300" width="4" height="10" fill="#32cd32"/><line x1="938.5" y1="278" x2="938.5" y2="305" stroke="#a0a0a0" stroke-width="1"/><rect x="936.5" y="292" width="4" height="2" fill="#32cd32"/><line x1="946.5" y1="285" x2="946.5" y2="302" stroke="#a0a0a0" stroke-width="1"/><rect x="944.5" y="292" width="4" height="2" fill="#a0a0a0"/><line x1="960.5" y1="279" x2="960.5" y2="296" stroke="#a0a0a0" stroke-width="1"/><rect x="958.5" y="283" width="4" height="9" fill="#32cd32"/><line x1="967.5" y1="278" x2="967.5" y2="292" stroke="#a0a0a0" stroke-width="1"/><rect x="965.5" y="283" width="4" height="4" fill="#e00000"/><line x1="974.5" y1="279" x2="974.5" y2="291" stroke="#a0a0a0" stroke-width="1"/><rect x="972.5" y="283" width="4" height="4" fill="#32cd32"/><line x1="981.5" y1="278" x2="981.5" y2="300" stroke="#a0a0a0" stroke-width="1"/><rect x="979.5" y="282" width="4" height="13" fill="#e00000"/><line x1="989.5" y1="296" x2="989.5" y2="316" stroke="#a0a0a0" stroke-width="1"/><rect x="987.5" y="302" width="4" height="4" fill="#e00000"/><line x1="996.5" y1="301" x2="996.5" y2="311" stroke="#a0a0a0" stroke-width="1"/><rect x="994.5" y="305" width="4" height="2" fill="#32cd32"/><line x1="1003.5" y1="300" x2="1003.5" y2="311" stroke="#a0a0a0" stroke-width="1"/><rect x="1001.5" y="305" width="4" height="2" fill="#e00000"/><line x1="1010.5" y1="293" x2="1010.5" y2="312" stroke="#a0a0a0" stroke-width="1"/><rect x="1008.5" y="297" width="4" height="11" fill="#32cd32"/><line x1="1017.5" y1="278" x2="1017.5" y2="300" stroke="#a0a0a0" stroke-width="1"/><rect x="1015.5" y="282" width="4" height="14" fill="#32cd32"/><line x1="1025.5" y1="279" x2="1025.5" y2="293" stroke="#a0a0a0" stroke-width="1"/><rect x="1023.5" y="283" width="4" height="5" fill="#e00000"/><line x1="1032.5" y1="274" x2="1032.5" y2="296" stroke="#a0a0a0" stroke-width="1"/><rect x="1030.5" y="278" width="4" height="14" fill="#32cd32"/><line x1="1039.5" y1="250" x2="1039.5" y2="287" stroke="#a0a0a0" stroke-width="1"/><rect x="1037.5" y="262" width="4" height="21" fill="#32cd32"/><line x1="1047.5" y1="256" x2="1047.5" y2="274" stroke="#a0a0a0" stroke-width="1"/><rect x="1045.5" y="260" width="4" height="10" fill="#e00000"/><line x1="1054.5" y1="256" x2="1054.5" y2="268" stroke="#a0a0a0" stroke-width="1"/><rect x="1052.5" y="261" width="4" height="2" fill="#32cd32"/><line x1="1061.5" y1="256" x2="1061.5" y2="266" stroke="#a0a0a0" stroke-width="1"/><rect x="1059.5" y="260" width="4" height="2" fill="#32cd32"/><line x1="1068.5" y1="256" x2="1068.5" y2="266" stroke="#a0a0a0" stroke-width="1"/><rect x="1066.5" y="260" width="4" height="2" fill="#e00000"/><line x1="1075.5" y1="254" x2="1075.5" y2="270" stroke="#a0a0a0" stroke-width="1"/><rect x="1073.5" y="258" width="4" height="8" fill="#32cd32"/><line x1="1082.5" y1="240" x2="1082.5" y2="262" stroke="#a0a0a0" stroke-width="1"/><rect x="1080.5" y="245" width="4" height="12" fill="#32cd32"/><line x1="1091.5" y1="228" x2="1091.5" y2="250" stroke="#a0a0a0" stroke-width="1"/><rect x="1089.5" y="232" width="4" height="14" fill="#32cd32"/><line x1="1098.5" y1="225" x2="1098.5" y2="236" stroke="#a0a0a0" stroke-width="1"/><rect x="1096.5" y="229" width="4" height="3" fill="#32cd32"/><line x1="1105.5" y1="224" x2="1105.5" y2="238" stroke="#a0a0a0" stroke-width="1"/><rect x="1103.5" y="230" width="4" height="2" fill="#a0a0a0"/><line x1="1111.5" y1="224" x2="1111.5" y2="238" stroke="#a0a0a0" stroke-width="1"/><rect x="1109.5" y="228" width="4" height="6" fill="#e00000"/><line x1="1118.5" y1="225" x2="1118.5" y2="236" stroke="#a0a0a0" stroke-width="1"/><rect x="1116.5" y="230" width="4" height="2" fill="#32cd32"/><line x1="1126.5" y1="219" x2="1126.5" y2="240" stroke="#a0a0a0" stroke-width="1"/><rect x="1124.5" y="223" width="4" height="13" fill="#32cd32"/><line x1="1133.5" y1="221" x2="1133.5" y2="232" stroke="#a0a0a0" stroke-width="1"/><rect x="1131.5" y="225" width="4" height="2" fill="#e00000"/><line x1="1140.5" y1="220" x2="1140.5" y2="234" stroke="#a0a0a0" stroke-width="1"/><rect x="1138.5" y="226" width="4" height="2" fill="#a0a0a0"/><line x1="1147.5" y1="212" x2="1147.5" y2="232" stroke="#a0a0a0" stroke-width="1"/><rect x="1145.5" y="216" width="4" height="12" fill="#32cd32"/><line x1="1154.5" y1="192" x2="1154.5" y2="220" stroke="#a0a0a0" stroke-width="1"/><rect x="1152.5" y="205" width="4" height="9" fill="#32cd32"/><line x1="1162.5" y1="198" x2="1162.5" y2="213" stroke="#a0a0a0" stroke-width="1"/><rect x="1160.5" y="202" width="4" height="7" fill="#32cd32"/><line x1="1169.5" y1="184" x2="1169.5" y2="204" stroke="#a0a0a0" stroke-width="1"/><rect x="1167.5" y="189" width="4" height="11" fill="#32cd32"/><line x1="1176.5" y1="182" x2="1176.5" y2="205" stroke="#a0a0a0" stroke-width="1"/><rect x="1174.5" y="186" width="4" height="15" fill="#e00000"/><line x1="1183.5" y1="182" x2="1183.5" y2="205" stroke="#a0a0a0" stroke-width="1"/><rect x="1181.5" y="186" width="4" height="15" fill="#32cd32"/><line x1="1191.5" y1="183" x2="1191.5" y2="200" stroke="#a0a0a0" stroke-width="1"/><rect x="1189.5" y="187" width="4" height="9" fill="#e00000"/><line x1="1198.5" y1="183" x2="1198.5" y2="205" stroke="#a0a0a0" stroke-width="1"/><rect x="1196.5" y="194" width="4" height="2" fill="#32cd32"/><line x1="1205.5" y1="192" x2="1205.5" y2="210" stroke="#a0a0a0" stroke-width="1"/><rect x="1203.5" y="196" width="4" height="10" fill="#e00000"/><line x1="996" y1="319" x2="1247" y2="185" stroke="#fff" stroke-width="4" stroke-linecap="round"/></svg>
<div style="position:absolute;right:101px;top:211px;white-space:nowrap;font-size:13px;color:#b0c4de;;">23:51:30</div>
<div style="position:absolute;right:101px;top:224px;white-space:nowrap;font-size:13px;color:#b0c4de;;">02:29</div>
<div style="position:absolute;left:1288px;top:98px;width:1px;height:428px;background:#b0c4de"></div>
<div style="position:absolute;left:1289px;top:101px;width:6px;height:1px;background:#b0c4de"></div>
<div style="position:absolute;left:1289px;top:104px;width:6px;height:1px;background:#b0c4de"></div>
<div style="position:absolute;left:1289px;top:107px;width:6px;height:1px;background:#b0c4de"></div>
<div style="position:absolute;left:1289px;top:110px;width:12px;height:1px;background:#b0c4de"></div>
<div style="position:absolute;left:1289px;top:113px;width:6px;height:1px;background:#b0c4de"></div>
<div style="position:absolute;left:1289px;top:116px;width:6px;height:1px;background:#b0c4de"></div>
<div style="position:absolute;left:1289px;top:119px;width:6px;height:1px;background:#b0c4de"></div>
<div style="position:absolute;left:1289px;top:122px;width:6px;height:1px;background:#b0c4de"></div>
<div style="position:absolute;left:1289px;top:125px;width:12px;height:1px;background:#b0c4de"></div>
<div style="position:absolute;left:1289px;top:128px;width:6px;height:1px;background:#b0c4de"></div>
<div style="position:absolute;left:1289px;top:131px;width:6px;height:1px;background:#b0c4de"></div>
<div style="position:absolute;left:1289px;top:134px;width:6px;height:1px;background:#b0c4de"></div>
<div style="position:absolute;left:1289px;top:137px;width:6px;height:1px;background:#b0c4de"></div>
<div style="position:absolute;left:1289px;top:140px;width:12px;height:1px;background:#b0c4de"></div>
<div style="position:absolute;left:1289px;top:143px;width:6px;height:1px;background:#b0c4de"></div>
<div style="position:absolute;left:1289px;top:146px;width:6px;height:1px;background:#b0c4de"></div>
<div style="position:absolute;left:1289px;top:149px;width:6px;height:1px;background:#b0c4de"></div>
<div style="position:absolute;left:1289px;top:152px;width:6px;height:1px;background:#b0c4de"></div>
<div style="position:absolute;left:1289px;top:155px;width:12px;height:1px;background:#b0c4de"></div>
<div style="position:absolute;left:1289px;top:158px;width:6px;height:1px;background:#b0c4de"></div>
<div style="position:absolute;left:1289px;top:161px;width:6px;height:1px;background:#b0c4de"></div>
<div style="position:absolute;left:1289px;top:165px;width:6px;height:1px;background:#b0c4de"></div>
<div style="position:absolute;left:1289px;top:168px;width:6px;height:1px;background:#b0c4de"></div>
<div style="position:absolute;left:1289px;top:171px;width:12px;height:1px;background:#b0c4de"></div>
<div style="position:absolute;left:1289px;top:174px;width:6px;height:1px;background:#b0c4de"></div>
<div style="position:absolute;left:1289px;top:177px;width:6px;height:1px;background:#b0c4de"></div>
<div style="position:absolute;left:1289px;top:180px;width:6px;height:1px;background:#b0c4de"></div>
<div style="position:absolute;left:1289px;top:183px;width:6px;height:1px;background:#b0c4de"></div>
<div style="position:absolute;left:1289px;top:186px;width:12px;height:1px;background:#b0c4de"></div>
<div style="position:absolute;left:1289px;top:189px;width:6px;height:1px;background:#b0c4de"></div>
<div style="position:absolute;left:1289px;top:192px;width:6px;height:1px;background:#b0c4de"></div>
<div style="position:absolute;left:1289px;top:195px;width:6px;height:1px;background:#b0c4de"></div>
<div style="position:absolute;left:1289px;top:198px;width:6px;height:1px;background:#b0c4de"></div>
<div style="position:absolute;left:1289px;top:201px;width:12px;height:1px;background:#b0c4de"></div>
<div style="position:absolute;left:1289px;top:204px;width:6px;height:1px;background:#b0c4de"></div>
<div style="position:absolute;left:1289px;top:207px;width:6px;height:1px;background:#b0c4de"></div>
<div style="position:absolute;left:1289px;top:210px;width:6px;height:1px;background:#b0c4de"></div>
<div style="position:absolute;left:1289px;top:213px;width:6px;height:1px;background:#b0c4de"></div>
<div style="position:absolute;left:1289px;top:216px;width:12px;height:1px;background:#b0c4de"></div>
<div style="position:absolute;left:1289px;top:219px;width:6px;height:1px;background:#b0c4de"></div>
<div style="position:absolute;left:1289px;top:222px;width:6px;height:1px;background:#b0c4de"></div>
<div style="position:absolute;left:1289px;top:225px;width:6px;height:1px;background:#b0c4de"></div>
<div style="position:absolute;left:1289px;top:228px;width:6px;height:1px;background:#b0c4de"></div>
<div style="position:absolute;left:1289px;top:231px;width:12px;height:1px;background:#b0c4de"></div>
<div style="position:absolute;left:1289px;top:234px;width:6px;height:1px;background:#b0c4de"></div>
<div style="position:absolute;left:1289px;top:237px;width:6px;height:1px;background:#b0c4de"></div>
<div style="position:absolute;left:1289px;top:241px;width:6px;height:1px;background:#b0c4de"></div>
<div style="position:absolute;left:1289px;top:244px;width:6px;height:1px;background:#b0c4de"></div>
<div style="position:absolute;left:1289px;top:247px;width:12px;height:1px;background:#b0c4de"></div>
<div style="position:absolute;left:1289px;top:250px;width:6px;height:1px;background:#b0c4de"></div>
<div style="position:absolute;left:1289px;top:253px;width:6px;height:1px;background:#b0c4de"></div>
<div style="position:absolute;left:1289px;top:256px;width:6px;height:1px;background:#b0c4de"></div>
<div style="position:absolute;left:1289px;top:259px;width:6px;height:1px;background:#b0c4de"></div>
<div style="position:absolute;left:1289px;top:262px;width:12px;height:1px;background:#b0c4de"></div>
<div style="position:absolute;left:1289px;top:265px;width:6px;height:1px;background:#b0c4de"></div>
<div style="position:absolute;left:1289px;top:268px;width:6px;height:1px;background:#b0c4de"></div>
<div style="position:absolute;left:1289px;top:271px;width:6px;height:1px;background:#b0c4de"></div>
<div style="position:absolute;left:1289px;top:274px;width:6px;height:1px;background:#b0c4de"></div>
<div style="position:absolute;left:1289px;top:277px;width:12px;height:1px;background:#b0c4de"></div>
<div style="position:absolute;left:1289px;top:280px;width:6px;height:1px;background:#b0c4de"></div>
<div style="position:absolute;left:1289px;top:283px;width:6px;height:1px;background:#b0c4de"></div>
<div style="position:absolute;left:1289px;top:286px;width:6px;height:1px;background:#b0c4de"></div>
<div style="position:absolute;left:1289px;top:289px;width:6px;height:1px;background:#b0c4de"></div>
<div style="position:absolute;left:1289px;top:292px;width:12px;height:1px;background:#b0c4de"></div>
<div style="position:absolute;left:1289px;top:295px;width:6px;height:1px;background:#b0c4de"></div>
<div style="position:absolute;left:1289px;top:298px;width:6px;height:1px;background:#b0c4de"></div>
<div style="position:absolute;left:1289px;top:301px;width:6px;height:1px;background:#b0c4de"></div>
<div style="position:absolute;left:1289px;top:304px;width:6px;height:1px;background:#b0c4de"></div>
<div style="position:absolute;left:1289px;top:307px;width:12px;height:1px;background:#b0c4de"></div>
<div style="position:absolute;left:1289px;top:310px;width:6px;height:1px;background:#b0c4de"></div>
<div style="position:absolute;left:1289px;top:313px;width:6px;height:1px;background:#b0c4de"></div>
<div style="position:absolute;left:1289px;top:317px;width:6px;height:1px;background:#b0c4de"></div>
<div style="position:absolute;left:1289px;top:320px;width:6px;height:1px;background:#b0c4de"></div>
<div style="position:absolute;left:1289px;top:323px;width:12px;height:1px;background:#b0c4de"></div>
<div style="position:absolute;left:1289px;top:326px;width:6px;height:1px;background:#b0c4de"></div>
<div style="position:absolute;left:1289px;top:329px;width:6px;height:1px;background:#b0c4de"></div>
<div style="position:absolute;left:1289px;top:332px;width:6px;height:1px;background:#b0c4de"></div>
<div style="position:absolute;left:1289px;top:335px;width:6px;height:1px;background:#b0c4de"></div>
<div style="position:absolute;left:1289px;top:338px;width:12px;height:1px;background:#b0c4de"></div>
<div style="position:absolute;left:1289px;top:341px;width:6px;height:1px;background:#b0c4de"></div>
<div style="position:absolute;left:1289px;top:344px;width:6px;height:1px;background:#b0c4de"></div>
<div style="position:absolute;left:1289px;top:347px;width:6px;height:1px;background:#b0c4de"></div>
<div style="position:absolute;left:1289px;top:350px;width:6px;height:1px;background:#b0c4de"></div>
<div style="position:absolute;left:1289px;top:353px;width:12px;height:1px;background:#b0c4de"></div>
<div style="position:absolute;left:1289px;top:356px;width:6px;height:1px;background:#b0c4de"></div>
<div style="position:absolute;left:1289px;top:359px;width:6px;height:1px;background:#b0c4de"></div>
<div style="position:absolute;left:1289px;top:362px;width:6px;height:1px;background:#b0c4de"></div>
<div style="position:absolute;left:1289px;top:365px;width:6px;height:1px;background:#b0c4de"></div>
<div style="position:absolute;left:1289px;top:368px;width:12px;height:1px;background:#b0c4de"></div>
<div style="position:absolute;left:1289px;top:371px;width:6px;height:1px;background:#b0c4de"></div>
<div style="position:absolute;left:1289px;top:374px;width:6px;height:1px;background:#b0c4de"></div>
<div style="position:absolute;left:1289px;top:377px;width:6px;height:1px;background:#b0c4de"></div>
<div style="position:absolute;left:1289px;top:380px;width:6px;height:1px;background:#b0c4de"></div>
<div style="position:absolute;left:1289px;top:383px;width:12px;height:1px;background:#b0c4de"></div>
<div style="position:absolute;left:1289px;top:386px;width:6px;height:1px;background:#b0c4de"></div>
<div style="position:absolute;left:1289px;top:389px;width:6px;height:1px;background:#b0c4de"></div>
<div style="position:absolute;left:1289px;top:393px;width:6px;height:1px;background:#b0c4de"></div>
<div style="position:absolute;left:1289px;top:396px;width:6px;height:1px;background:#b0c4de"></div>
<div style="position:absolute;left:1289px;top:399px;width:12px;height:1px;background:#b0c4de"></div>
<div style="position:absolute;left:1289px;top:402px;width:6px;height:1px;background:#b0c4de"></div>
<div style="position:absolute;left:1289px;top:405px;width:6px;height:1px;background:#b0c4de"></div>
<div style="position:absolute;left:1289px;top:408px;width:6px;height:1px;background:#b0c4de"></div>
<div style="position:absolute;left:1289px;top:411px;width:6px;height:1px;background:#b0c4de"></div>
<div style="position:absolute;left:1289px;top:414px;width:12px;height:1px;background:#b0c4de"></div>
<div style="position:absolute;left:1289px;top:417px;width:6px;height:1px;background:#b0c4de"></div>
<div style="position:absolute;left:1289px;top:420px;width:6px;height:1px;background:#b0c4de"></div>
<div style="position:absolute;left:1289px;top:423px;width:6px;height:1px;background:#b0c4de"></div>
<div style="position:absolute;left:1289px;top:426px;width:6px;height:1px;background:#b0c4de"></div>
<div style="position:absolute;left:1289px;top:429px;width:12px;height:1px;background:#b0c4de"></div>
<div style="position:absolute;left:1289px;top:432px;width:6px;height:1px;background:#b0c4de"></div>
<div style="position:absolute;left:1289px;top:435px;width:6px;height:1px;background:#b0c4de"></div>
<div style="position:absolute;left:1289px;top:438px;width:6px;height:1px;background:#b0c4de"></div>
<div style="position:absolute;left:1289px;top:441px;width:6px;height:1px;background:#b0c4de"></div>
<div style="position:absolute;left:1289px;top:444px;width:12px;height:1px;background:#b0c4de"></div>
<div style="position:absolute;left:1289px;top:447px;width:6px;height:1px;background:#b0c4de"></div>
<div style="position:absolute;left:1289px;top:450px;width:6px;height:1px;background:#b0c4de"></div>
<div style="position:absolute;right:3px;top:102px;white-space:nowrap;font-size:13px;color:#b0c4de;transform:scale(0.95,1.1);transform-origin:100% 50%;;">4234.00</div>
<div style="position:absolute;right:3px;top:117px;white-space:nowrap;font-size:13px;color:#b0c4de;transform:scale(0.95,1.1);transform-origin:100% 50%;;">4233.00</div>
<div style="position:absolute;right:3px;top:132px;white-space:nowrap;font-size:13px;color:#b0c4de;transform:scale(0.95,1.1);transform-origin:100% 50%;;">4232.00</div>
<div style="position:absolute;right:3px;top:147px;white-space:nowrap;font-size:13px;color:#b0c4de;transform:scale(0.95,1.1);transform-origin:100% 50%;;">4231.00</div>
<div style="position:absolute;right:3px;top:163px;white-space:nowrap;font-size:13px;color:#b0c4de;transform:scale(0.95,1.1);transform-origin:100% 50%;;">4230.00</div>
<div style="position:absolute;right:3px;top:178px;white-space:nowrap;font-size:13px;color:#b0c4de;transform:scale(0.95,1.1);transform-origin:100% 50%;;">4229.00</div>
<div style="position:absolute;right:3px;top:208px;white-space:nowrap;font-size:13px;color:#b0c4de;transform:scale(0.95,1.1);transform-origin:100% 50%;;">4227.00</div>
<div style="position:absolute;right:3px;top:223px;white-space:nowrap;font-size:13px;color:#b0c4de;transform:scale(0.95,1.1);transform-origin:100% 50%;;">4226.00</div>
<div style="position:absolute;right:3px;top:239px;white-space:nowrap;font-size:13px;color:#b0c4de;transform:scale(0.95,1.1);transform-origin:100% 50%;;">4225.00</div>
<div style="position:absolute;right:3px;top:254px;white-space:nowrap;font-size:13px;color:#b0c4de;transform:scale(0.95,1.1);transform-origin:100% 50%;;">4224.00</div>
<div style="position:absolute;right:3px;top:269px;white-space:nowrap;font-size:13px;color:#b0c4de;transform:scale(0.95,1.1);transform-origin:100% 50%;;">4223.00</div>
<div style="position:absolute;right:3px;top:284px;white-space:nowrap;font-size:13px;color:#b0c4de;transform:scale(0.95,1.1);transform-origin:100% 50%;;">4222.00</div>
<div style="position:absolute;right:3px;top:299px;white-space:nowrap;font-size:13px;color:#b0c4de;transform:scale(0.95,1.1);transform-origin:100% 50%;;">4221.00</div>
<div style="position:absolute;right:3px;top:315px;white-space:nowrap;font-size:13px;color:#b0c4de;transform:scale(0.95,1.1);transform-origin:100% 50%;;">4220.00</div>
<div style="position:absolute;right:3px;top:330px;white-space:nowrap;font-size:13px;color:#b0c4de;transform:scale(0.95,1.1);transform-origin:100% 50%;;">4219.00</div>
<div style="position:absolute;right:3px;top:345px;white-space:nowrap;font-size:13px;color:#b0c4de;transform:scale(0.95,1.1);transform-origin:100% 50%;;">4218.00</div>
<div style="position:absolute;right:3px;top:360px;white-space:nowrap;font-size:13px;color:#b0c4de;transform:scale(0.95,1.1);transform-origin:100% 50%;;">4217.00</div>
<div style="position:absolute;right:3px;top:375px;white-space:nowrap;font-size:13px;color:#b0c4de;transform:scale(0.95,1.1);transform-origin:100% 50%;;">4216.00</div>
<div style="position:absolute;right:3px;top:391px;white-space:nowrap;font-size:13px;color:#b0c4de;transform:scale(0.95,1.1);transform-origin:100% 50%;;">4215.00</div>
<div style="position:absolute;right:3px;top:406px;white-space:nowrap;font-size:13px;color:#b0c4de;transform:scale(0.95,1.1);transform-origin:100% 50%;;">4214.00</div>
<div style="position:absolute;right:3px;top:421px;white-space:nowrap;font-size:13px;color:#b0c4de;transform:scale(0.95,1.1);transform-origin:100% 50%;;">4213.00</div>
<div style="position:absolute;right:3px;top:436px;white-space:nowrap;font-size:13px;color:#b0c4de;transform:scale(0.95,1.1);transform-origin:100% 50%;;">4212.00</div>
<svg style="position:absolute;left:1295px;top:196px;" width="71" height="19" viewBox="0 0 71 19"><polygon points="0,9.5 10,0 71,0 71,19 10,19" fill="#8c8c8c"/></svg>
<div style="position:absolute;right:2px;top:197px;white-space:nowrap;font-size:13px;font-weight:bold;color:#000;;">4227.75</div>
<div style="position:absolute;left:789px;top:431px;width:20px;height:20px;"><svg width="20" height="20" style="position:absolute;left:0;top:0"><line x1="2" y1="2" x2="10" y2="10" stroke="#d8d8d8" stroke-width="1.4"/><line x1="10" y1="10" x2="16.5" y2="16.5" stroke="#f0b020" stroke-width="3" stroke-linecap="round"/><line x1="4" y1="15" x2="14" y2="5" stroke="#f4f4f4" stroke-width="2"/><path d="M12.5,2 a3,3 0 1 0 5,5" fill="none" stroke="#f4f4f4" stroke-width="1.8"/><path d="M1.5,13.5 a2.6,2.6 0 1 0 4,4" fill="none" stroke="#f4f4f4" stroke-width="1.8"/></svg></div>
<div style="position:absolute;left:811px;top:434px;white-space:nowrap;font-size:13px;color:#b0c4de;">O: 4218.75&nbsp; H: 4219.75&nbsp; L: 4218.75&nbsp; C: 4219.25</div>
<svg style="position:absolute;left:0;top:0" width="1366" height="768"><line x1="786" y1="453.5" x2="1366" y2="453.5" stroke="#fff" stroke-width="1.5" stroke-dasharray="4,3"/></svg>
<div style="position:absolute;left:1066px;top:510px;width:5px;height:13px;background:#a00000"></div>
<div style="position:absolute;left:1073px;top:507px;width:5px;height:16px;background:#a00000"></div>
<div style="position:absolute;left:1080px;top:483px;width:5px;height:40px;background:#a00000"></div>
<div style="position:absolute;left:1088px;top:487px;width:5px;height:36px;background:#a00000"></div>
<div style="position:absolute;left:1095px;top:494px;width:5px;height:29px;background:#a00000"></div>
<div style="position:absolute;left:1102px;top:503px;width:5px;height:20px;background:#00b4b4"></div>
<div style="position:absolute;left:1109px;top:507px;width:5px;height:16px;background:#a00000"></div>
<div style="position:absolute;left:1116px;top:498px;width:5px;height:25px;background:#00b4b4"></div>
<div style="position:absolute;left:1124px;top:502px;width:5px;height:21px;background:#00b4b4"></div>
<div style="position:absolute;left:1131px;top:509px;width:5px;height:14px;background:#a00000"></div>
<div style="position:absolute;left:1138px;top:505px;width:5px;height:18px;background:#a00000"></div>
<div style="position:absolute;left:1145px;top:505px;width:5px;height:18px;background:#00b4b4"></div>
<div style="position:absolute;left:1152px;top:457px;width:5px;height:66px;background:#00b4b4"></div>
<div style="position:absolute;left:1160px;top:490px;width:5px;height:33px;background:#a00000"></div>
<div style="position:absolute;left:1167px;top:484px;width:5px;height:39px;background:#00b4b4"></div>
<div style="position:absolute;left:1174px;top:497px;width:5px;height:26px;background:#a00000"></div>
<div style="position:absolute;left:1181px;top:504px;width:5px;height:19px;background:#00b4b4"></div>
<div style="position:absolute;left:1189px;top:499px;width:5px;height:24px;background:#a00000"></div>
<div style="position:absolute;left:1196px;top:486px;width:5px;height:37px;background:#00b4b4"></div>
<div style="position:absolute;left:1203px;top:519px;width:5px;height:4px;background:#a00000"></div>
<div style="position:absolute;left:1304px;top:446px;width:62px;height:17px;background:#8c8c8c;border:1px solid #c8c8c8;"><div style="position:absolute;right:3px;top:0px;font-size:13px;color:#fff">9909</div></div>
<div style="position:absolute;left:1304px;top:509px;width:52px;height:17px;background:#8c8c8c;border:1px solid #c8c8c8;"><div style="position:absolute;right:3px;top:0px;font-size:13px;color:#fff">537</div></div>
<div style="position:absolute;left:1289px;top:516px;width:12px;height:1px;background:#b0c4de"></div>
<div style="position:absolute;left:786px;top:526px;width:580px;height:1px;background:#b0c4de"></div>
<div style="position:absolute;left:786px;top:547px;width:580px;height:1px;background:#b0c4de"></div>
<div style="position:absolute;left:1105px;top:550px;white-space:nowrap;font-size:12px;color:#b0c4de;">18:15</div>
<div style="position:absolute;left:1180px;top:549px;width:29px;height:16px;border:1px solid #b0c4de"></div>
<div style="position:absolute;right:8px;top:550px;white-space:nowrap;font-size:13px;color:#b0c4de;">2021.06.04 18:51:01</div>
<div style="position:absolute;left:0px;top:566px;width:1366px;height:3px;background:#fff"></div>
<div style="position:absolute;left:0px;top:568px;width:1366px;height:1px;background:#8c8c8c"></div>
<div style="position:absolute;left:0px;top:569px;width:1366px;height:19px;background:#f0f0f0;"></div>
<div style="position:absolute;left:88px;top:570px;width:1278px;height:17px;background:#f0f0f0;border-top:1px solid #000;"></div>
<div style="position:absolute;left:0px;top:570px;width:4px;height:1px;background:#000"></div>
<div style="position:absolute;left:4px;top:570px;width:84px;height:17px;background:#fff;border:1px solid #000;border-top:0;border-width:0 2px 2px 1px;"></div>
<div style="position:absolute;left:14px;top:572px;white-space:nowrap;font-size:12px;;transform:scaleX(0.89);transform-origin:0 0;">MESM21,M1</div>
<div style="position:absolute;left:100px;top:573px;white-space:nowrap;font-size:12px;color:#6d6d6d;;transform:scaleX(0.89);transform-origin:0 0;">EPM21,M1</div>
<svg style="position:absolute;left:1328px;top:575px;" width="6" height="9" viewBox="0 0 6 9"><polygon points="5,0 5,9 0,4.5" fill="#a0a0a0"/></svg>
<svg style="position:absolute;left:1351px;top:575px;" width="6" height="9" viewBox="0 0 6 9"><polygon points="0,0 0,9 5,4.5" fill="#a0a0a0"/></svg>
<div style="position:absolute;left:0px;top:587px;width:1366px;height:1px;background:#d8d8d8"></div>
<div style="position:absolute;left:0px;top:588px;width:1366px;height:117px;background:#f0f0f0;"></div>
<div style="position:absolute;left:3px;top:590px;white-space:nowrap;;"><b style="font-size:14px">×</b></div>
<div style="position:absolute;left:1px;top:606px;width:13px;height:94px;background:#c6d3e3;"></div>
<div style="position:absolute;left:-34px;top:645px;white-space:nowrap;font-size:12px;color:#8a9ab0;transform:rotate(-90deg);transform-origin:center;width:82px;;">Инструменты</div>
<div style="position:absolute;left:15px;top:592px;width:1351px;height:89px;background:#fff;border-top:1px solid #a8a8a8;border-left:1px solid #d0d0d0;"></div>
<div style="position:absolute;left:16px;top:593px;width:1350px;height:22px;background:linear-gradient(180deg,#fff 0%,#fff 35%,#f2f2f2 40%,#f4f4f4 100%);border-bottom:1px solid #e4e4e4;"></div>
<div style="position:absolute;left:147px;top:594px;width:1px;height:42px;background:#e4e4e4"></div>
<div style="position:absolute;left:238px;top:594px;width:1px;height:42px;background:#e4e4e4"></div>
<div style="position:absolute;left:310px;top:594px;width:1px;height:42px;background:#e4e4e4"></div>
<div style="position:absolute;left:371px;top:594px;width:1px;height:42px;background:#e4e4e4"></div>
<div style="position:absolute;left:472px;top:594px;width:1px;height:42px;background:#e4e4e4"></div>
<div style="position:absolute;left:573px;top:594px;width:1px;height:42px;background:#e4e4e4"></div>
<div style="position:absolute;left:1117px;top:594px;width:1px;height:42px;background:#e4e4e4"></div>
<div style="position:absolute;left:1262px;top:594px;width:1px;height:42px;background:#e4e4e4"></div>
<div style="position:absolute;left:22px;top:598px;white-space:nowrap;font-size:12px;;transform:scaleX(0.92);transform-origin:0 0;">Время</div>
<svg style="position:absolute;left:70px;top:601px;" width="9" height="6" viewBox="0 0 9 6"><polygon points="0,6 9,6 4.5,0" fill="#404040"/></svg>
<div style="position:absolute;right:1133px;top:598px;white-space:nowrap;font-size:12px;;transform:scaleX(0.92);transform-origin:100% 0;">Символ</div>
<div style="position:absolute;right:1062px;top:598px;white-space:nowrap;font-size:12px;;transform:scaleX(0.92);transform-origin:100% 0;">Тикет</div>
<div style="position:absolute;right:1001px;top:598px;white-space:nowrap;font-size:12px;;transform:scaleX(0.92);transform-origin:100% 0;">Тип</div>
<div style="position:absolute;right:900px;top:598px;white-space:nowrap;font-size:12px;;transform:scaleX(0.92);transform-origin:100% 0;">Объем</div>
<div style="position:absolute;right:799px;top:598px;white-space:nowrap;font-size:12px;;transform:scaleX(0.92);transform-origin:100% 0;">Цена</div>
<div style="position:absolute;right:255px;top:598px;white-space:nowrap;font-size:12px;;transform:scaleX(0.92);transform-origin:100% 0;">Комиссия</div>
<div style="position:absolute;right:110px;top:598px;white-space:nowrap;font-size:12px;;transform:scaleX(0.92);transform-origin:100% 0;">Прибыль</div>
<div style="position:absolute;right:11px;top:598px;white-space:nowrap;font-size:12px;;transform:scaleX(0.92);transform-origin:100% 0;">Изменение</div>
<svg style="position:absolute;left:18px;top:617px;" width="13" height="17" viewBox="0 0 13 17"><path d="M1.5,1.5 h10 v10 l-4,4 h-6 z" fill="#fff" stroke="#f05a28" stroke-width="1.5"/><path d="M7.5,15.5 v-4 h4" fill="#f05a28" stroke="#f05a28"/><g stroke="#f05a28" stroke-width="1"><line x1="4" y1="5" x2="9" y2="5"/><line x1="4" y1="8" x2="9" y2="8"/></g></svg>
<div style="position:absolute;left:37px;top:619px;white-space:nowrap;font-size:12px;;transform:scaleX(0.89);transform-origin:0 0;">2021.06.04 17:40:20</div>
<div style="position:absolute;right:1133px;top:619px;white-space:nowrap;font-size:12px;color:#000;transform:scaleX(0.9);transform-origin:100% 0;">mesm21</div>
<div style="position:absolute;right:1060px;top:619px;white-space:nowrap;font-size:12px;color:#000;transform:scaleX(0.9);transform-origin:100% 0;">16814330</div>
<div style="position:absolute;right:999px;top:619px;white-space:nowrap;font-size:12px;color:#000;transform:scaleX(0.9);transform-origin:100% 0;">sell</div>
<div style="position:absolute;right:898px;top:619px;white-space:nowrap;font-size:12px;color:#000;transform:scaleX(0.9);transform-origin:100% 0;">1</div>
<div style="position:absolute;right:797px;top:619px;white-space:nowrap;font-size:12px;color:#000;transform:scaleX(0.9);transform-origin:100% 0;">4222.75</div>
<div style="position:absolute;right:254px;top:619px;white-space:nowrap;font-size:12px;color:#000;transform:scaleX(0.9);transform-origin:100% 0;">-0.84</div>
<div style="position:absolute;right:109px;top:619px;white-space:nowrap;font-size:12px;color:#f00;transform:scaleX(0.9);transform-origin:100% 0;">-7.50</div>
<div style="position:absolute;right:9px;top:619px;white-space:nowrap;font-size:12px;color:#f00;transform:scaleX(0.9);transform-origin:100% 0;">-0.04 %</div>
<div style="position:absolute;left:573px;top:616px;width:40px;height:20px;background:#ffa3a3"></div>
<div style="position:absolute;left:16px;top:637px;width:1350px;height:19px;background:#c8c8c8"></div>
<svg style="position:absolute;left:18px;top:640px;" width="13" height="13" viewBox="0 0 13 13"><circle cx="6.5" cy="6.5" r="5.5" fill="none" stroke="#202020" stroke-width="1.3"/><line x1="3.5" y1="6.5" x2="9.5" y2="6.5" stroke="#202020" stroke-width="1.3"/></svg>
<div style="position:absolute;left:37px;top:639px;white-space:nowrap;font-size:12px;font-weight:bold;;transform:scaleX(0.9);transform-origin:0 0;">Прибыль: -8.34&nbsp; Кредит: 0.00&nbsp; Депозит: 0.00&nbsp; Снятие: 0.00&nbsp; Баланс: -8.34</div>
<div style="position:absolute;right:254px;top:639px;white-space:nowrap;font-size:12px;font-weight:bold;;transform:scaleX(0.9);transform-origin:100% 0;">-0.84</div>
<div style="position:absolute;right:109px;top:639px;white-space:nowrap;font-size:12px;font-weight:bold;;transform:scaleX(0.9);transform-origin:100% 0;">-7.50</div>
<div style="position:absolute;left:15px;top:680px;width:1351px;height:1px;background:#000"></div>
<div style="position:absolute;left:146px;top:680px;width:65px;height:21px;background:#fff;border:1px solid #000;border-top:0;"></div>
<div style="position:absolute;left:15px;top:701px;width:1351px;height:1px;background:#c0c0c0"></div>
<div style="position:absolute;left:28px;top:684px;white-space:nowrap;font-size:12px;color:#6d6d6d;;transform:scaleX(0.95);transform-origin:0 0;">Торговля</div>
<div style="position:absolute;left:87px;top:684px;white-space:nowrap;font-size:12px;color:#6d6d6d;;transform:scaleX(0.95);transform-origin:0 0;">|</div>
<div style="position:absolute;left:97px;top:684px;white-space:nowrap;font-size:12px;color:#6d6d6d;;transform:scaleX(0.95);transform-origin:0 0;">Активы</div>
<div style="position:absolute;left:221px;top:684px;white-space:nowrap;font-size:12px;color:#6d6d6d;;transform:scaleX(0.95);transform-origin:0 0;">Новости</div>
<div style="position:absolute;left:277px;top:684px;white-space:nowrap;font-size:12px;color:#6d6d6d;;transform:scaleX(0.95);transform-origin:0 0;">|</div>
<div style="position:absolute;left:286px;top:684px;white-space:nowrap;font-size:12px;color:#6d6d6d;;transform:scaleX(0.95);transform-origin:0 0;">Почта</div>
<div style="position:absolute;left:337px;top:684px;white-space:nowrap;font-size:12px;color:#6d6d6d;;transform:scaleX(0.95);transform-origin:0 0;">|</div>
<div style="position:absolute;left:346px;top:684px;white-space:nowrap;font-size:12px;color:#6d6d6d;;transform:scaleX(0.95);transform-origin:0 0;">Календарь</div>
<div style="position:absolute;left:412px;top:684px;white-space:nowrap;font-size:12px;color:#6d6d6d;;transform:scaleX(0.95);transform-origin:0 0;">|</div>
<div style="position:absolute;left:422px;top:684px;white-space:nowrap;font-size:12px;color:#6d6d6d;;transform:scaleX(0.95);transform-origin:0 0;">Компания</div>
<div style="position:absolute;left:487px;top:684px;white-space:nowrap;font-size:12px;color:#6d6d6d;;transform:scaleX(0.95);transform-origin:0 0;">|</div>
<div style="position:absolute;left:496px;top:684px;white-space:nowrap;font-size:12px;color:#6d6d6d;;transform:scaleX(0.95);transform-origin:0 0;">Алерты</div>
<div style="position:absolute;left:546px;top:684px;white-space:nowrap;font-size:12px;color:#6d6d6d;;transform:scaleX(0.95);transform-origin:0 0;">|</div>
<div style="position:absolute;left:556px;top:684px;white-space:nowrap;font-size:12px;color:#6d6d6d;;transform:scaleX(0.95);transform-origin:0 0;">Статьи</div>
<div style="position:absolute;left:154px;top:684px;white-space:nowrap;font-size:12px;color:#000;;transform:scaleX(0.95);transform-origin:0 0;">История</div>
<div style="position:absolute;left:321px;top:691px;white-space:nowrap;font-size:9px;font-weight:bold;color:#e00000;;">7</div>
<div style="position:absolute;left:592px;top:691px;white-space:nowrap;font-size:9px;font-weight:bold;color:#e00000;;">2</div>
<div style="position:absolute;left:1063px;top:688px;white-space:nowrap;font-size:12px;color:#000;;transform:scaleX(0.95);transform-origin:0 0;">Маркет</div>
<svg style="position:absolute;left:1118px;top:688px;" width="14" height="14" viewBox="0 0 14 14"><g fill="none" stroke="#1e90ff" stroke-width="1.5"><path d="M2,8 A5,5 0 0 1 12,8"/><path d="M4.5,8.5 A2.5,2.5 0 0 1 9.5,8.5"/></g><rect x="4" y="9" width="2" height="5" fill="#20b020"/><rect x="8" y="8" width="2" height="6" fill="#20b020"/></svg>
<div style="position:absolute;left:1135px;top:688px;white-space:nowrap;font-size:12px;;transform:scaleX(0.95);transform-origin:0 0;">Сигналы</div>
<svg style="position:absolute;left:1194px;top:688px;" width="17" height="14" viewBox="0 0 17 14"><ellipse cx="8.5" cy="5" rx="7" ry="4" fill="#cde8fa" stroke="#3a9ad9"/><rect x="3" y="6" width="11" height="3" fill="#3a4a50"/><rect x="3" y="10" width="11" height="3" fill="#3a4a50"/></svg>
<div style="position:absolute;left:1212px;top:688px;white-space:nowrap;font-size:12px;;transform:scaleX(0.95);transform-origin:0 0;">VPS</div>
<svg style="position:absolute;left:1245px;top:688px;" width="15" height="14" viewBox="0 0 15 14"><rect x="0.5" y="0.5" width="14" height="13" fill="#1a3a5a" stroke="#1e5aa0"/><rect x="1" y="1" width="13" height="2" fill="#3a8ad0"/><path d="M1,11 L5,7 L8,9 L14,4 L14,12 L1,12 z" fill="#40c040"/></svg>
<div style="position:absolute;left:1263px;top:688px;white-space:nowrap;font-size:12px;;transform:scaleX(0.94);transform-origin:0 0;">Тестер стратегий</div>
<div style="position:absolute;left:0px;top:704px;width:1366px;height:1px;background:#d8d8d8"></div>
<div style="position:absolute;left:0px;top:705px;width:1366px;height:23px;background:#f0f0f0;"></div>
<div style="position:absolute;left:3px;top:710px;white-space:nowrap;font-size:12px;;transform:scaleX(0.95);transform-origin:0 0;">Для вызова справки нажмите F1</div>
<div style="position:absolute;left:1112px;top:708px;width:1px;height:18px;background:#c0c0c0"></div>
<div style="position:absolute;left:1181px;top:708px;width:1px;height:18px;background:#c0c0c0"></div>
<div style="position:absolute;left:1247px;top:708px;width:1px;height:18px;background:#c0c0c0"></div>
<svg style="position:absolute;left:1253px;top:710px;" width="16" height="14" viewBox="0 0 16 14"><g fill="#3aaa3a"><rect x="0" y="11" width="2" height="3"/><rect x="3" y="9" width="2" height="5"/><rect x="6" y="7" width="2" height="7"/><rect x="9" y="4" width="2" height="10"/><rect x="12" y="1" width="2" height="13" fill="#b0b0b0"/></g></svg>
<div style="position:absolute;left:1273px;top:710px;white-space:nowrap;font-size:12px;;">200.23 ms</div>
<div style="position:absolute;left:0px;top:728px;width:1366px;height:40px;background:linear-gradient(180deg,#5a78a0 0%,#3c5680 6%,#3a5478 46%,#0e2652 52%,#0a2250 100%);"></div>
<div style="position:absolute;left:0px;top:728px;width:1366px;height:1px;background:#1a2a40"></div>
<div style="position:absolute;left:9px;top:730px;width:37px;height:37px;border-radius:50%;background:radial-gradient(circle at 50% 35%,#7ab8e8 0%,#2a6ab8 45%,#0c3a78 80%,#082a58 100%);border:1px solid #3a5a8a"></div>
<svg style="position:absolute;left:17px;top:738px;" width="21" height="21" viewBox="0 0 21 21"><path d="M1,4 Q5,1 9,3.5 L8,9.5 Q4,7.5 0,10 z" fill="#f25022"/><path d="M11,3.5 Q15,6 20,2 L19,8 Q15,11 10,9.5 z" fill="#7fba00"/><path d="M0,12 Q4,9.5 8,11.5 L7,17.5 Q3,15.5 -0.5,18 z" fill="#00a4ef"/><path d="M10,11.5 Q14.5,13.5 19,10 L18,16 Q14,19 9,17.5 z" fill="#ffb900"/></svg>
<svg style="position:absolute;left:73px;top:732px;" width="31" height="30" viewBox="0 0 31 30"><rect x="8" y="3" width="21" height="25" fill="#fff" stroke="#3a9a4a"/><g stroke="#7ac08a"><line x1="16" y1="10" x2="28" y2="10"/><line x1="16" y1="15" x2="28" y2="15"/><line x1="16" y1="20" x2="28" y2="20"/><line x1="22" y1="5" x2="22" y2="27"/></g><path d="M2,6 L18,3 L18,27 L2,24 z" fill="#1e8a3e"/><path d="M5,9 L15,21 M15,9 L5,21" stroke="#fff" stroke-width="3"/></svg>
<svg style="position:absolute;left:135px;top:732px;" width="31" height="30" viewBox="0 0 31 30"><rect x="8" y="3" width="21" height="25" fill="#fff" stroke="#2a5ab0"/><g stroke="#8aa8d8"><line x1="17" y1="10" x2="28" y2="10"/><line x1="17" y1="15" x2="28" y2="15"/><line x1="17" y1="20" x2="28" y2="20"/></g><path d="M2,6 L19,3 L19,27 L2,24 z" fill="#1a56b8"/><path d="M4,9 L7,21 L10.5,12 L14,21 L17,9" fill="none" stroke="#fff" stroke-width="2.4"/></svg>
<svg style="position:absolute;left:197px;top:732px;" width="32" height="30" viewBox="0 0 32 30"><g transform="rotate(-8 16 15)"><rect x="5" y="2" width="22" height="27" rx="2" fill="#d8d8d8" stroke="#707070"/><rect x="8" y="5" width="16" height="6" fill="#c8d8c0" stroke="#606060"/><g fill="#505050"><rect x="8" y="14" width="3" height="3"/><rect x="13" y="14" width="3" height="3"/><rect x="18" y="14" width="3" height="3"/><rect x="8" y="19" width="3" height="3"/><rect x="13" y="19" width="3" height="3"/><rect x="18" y="19" width="3" height="3"/><rect x="8" y="24" width="3" height="3"/><rect x="13" y="24" width="3" height="3"/><rect x="18" y="24" width="3" height="3"/></g></g></svg>
<svg style="position:absolute;left:257px;top:733px;" width="36" height="30" viewBox="0 0 36 30"><path d="M2,6 h10 l3,3 h18 v19 h-31 z" fill="#e8c060" stroke="#b08a30"/><rect x="6" y="3" width="24" height="8" fill="#fff" stroke="#aaa"/><path d="M2,12 h31 v16 h-31 z" fill="#f4d88a" stroke="#c09a40"/><rect x="10" y="18" width="16" height="9" fill="#6aa0d8" stroke="#3a70b0"/></svg>
<div style="position:absolute;left:308px;top:729px;width:58px;height:39px;background:linear-gradient(180deg,rgba(255,255,255,0.18),rgba(255,255,255,0.05));border:1px solid #6a86b0;border-radius:2px;"></div>
<svg style="position:absolute;left:322px;top:733px;" width="30" height="31" viewBox="0 0 30 31"><ellipse cx="15" cy="15.5" rx="13" ry="14.5" fill="#e0141e"/><ellipse cx="15" cy="15.5" rx="6" ry="11" fill="#3a1010"/><ellipse cx="15" cy="15.5" rx="5" ry="10.5" fill="#20304a"/></svg>
<div style="position:absolute;left:370px;top:729px;width:58px;height:39px;background:linear-gradient(180deg,#a0b8d8,#7890b8 50%,#6a82aa 100%);border:1px solid #c0d0e8;border-radius:2px;"></div>
<svg style="position:absolute;left:383px;top:731px;" width="32" height="34" viewBox="0 0 32 34"><path d="M15,3 q8,-1 9,7 q-4,3 -9,2 q-4,-3 0,-9z" fill="#40b040"/><circle cx="13" cy="8" r="6" fill="#52c040"/><circle cx="8" cy="20" r="7" fill="#f2c020"/><circle cx="22" cy="21" r="7" fill="#2a80e0"/><circle cx="15" cy="15" r="5" fill="#ffd84a"/><circle cx="18" cy="15" r="6.5" fill="#fff" stroke="#f08a20" stroke-width="1.5"/><text x="18" y="19" font-size="10" font-weight="bold" fill="#f07010" text-anchor="middle" font-family="Liberation Sans">5</text></svg>
<div style="position:absolute;left:1100px;top:738px;white-space:nowrap;font-size:12px;color:#fff;;">EN</div>
<svg style="position:absolute;left:1130px;top:736px;" width="140" height="22" viewBox="0 0 140 22"><rect x="5" y="2" width="6" height="5" fill="#c0c0c0"/><rect x="4" y="6" width="8" height="9" rx="1" fill="#909090"/><line x1="8" y1="15" x2="8" y2="20" stroke="#909090" stroke-width="2"/><circle cx="12.5" cy="15" r="4.5" fill="#30a030"/><polyline points="10.5,15 12,17 14.5,13" fill="none" stroke="#fff" stroke-width="1.2"/><circle cx="33.7" cy="10" r="8" fill="#40b040"/><circle cx="31" cy="7" r="3" fill="#90e090"/><circle cx="35.5" cy="14" r="5.5" fill="#7a3ac8" stroke="#fff" stroke-width="0.8"/><text x="35.5" y="17.5" font-size="8" fill="#fff" text-anchor="middle" font-family="Liberation Sans">4</text><rect x="51" y="2" width="1.6" height="17" fill="#fff"/><path d="M52.5,2.5 h5 l2,2 h5 v7 h-5 l-2,-2 h-5z" fill="#fff"/><circle cx="60.5" cy="15.5" r="4.5" fill="#e02020" stroke="#fff" stroke-width="0.8"/><path d="M58.5,13.5 l4,4 M62.5,13.5 l-4,4" stroke="#fff" stroke-width="1.2"/><g fill="#fff"><rect x="75" y="15" width="2.5" height="3"/><rect x="79" y="12" width="2.5" height="6"/><rect x="83" y="9" width="2.5" height="9" fill="#8090a0"/><rect x="87" y="5" width="2.5" height="13" fill="#8090a0"/></g><path d="M98,8 h3 l5,-5 v16 l-5,-5 h-3z" fill="#fff"/><path d="M108,7 q2,4 0,8 M111,5 q3,6 0,12" stroke="#fff" fill="none" stroke-width="1.2"/><rect x="123" y="4" width="8" height="14" fill="none" stroke="#fff" stroke-width="1.8"/><path d="M128,8 h7 v4 h-7z M130,5 v3 M133,5 v3 M131,12 v5" stroke="#fff" fill="#fff" stroke-width="1"/></svg>
<div style="position:absolute;left:1300px;top:733px;white-space:nowrap;font-size:12px;color:#fff;;transform:scaleX(0.95);transform-origin:0 0;">23:51</div>
<div style="position:absolute;left:1286px;top:750px;white-space:nowrap;font-size:12px;color:#fff;;transform:scaleX(0.88);transform-origin:0 0;">04.06.2021</div>
<div style="position:absolute;left:1352px;top:729px;width:14px;height:39px;background:linear-gradient(180deg,#4a6490,#2a4470 50%,#10285a 52%,#0c2252);border:1px solid #6a84a8;border-right:0;"></div>
<div style="position:absolute;left:1064px;top:452px;width:12px;height:316px;background:linear-gradient(90deg,rgba(0,0,0,0.75),rgba(0,0,0,0))"></div>
<div style="position:absolute;left:600px;top:448px;width:464px;height:320px;background:#2a3a58;border:1px solid #8a98a8;border-radius:6px 6px 0 0;"></div>
<div style="position:absolute;left:601px;top:449px;width:462px;height:29px;background:linear-gradient(180deg,#0c1830 0%,#1a2844 25%,#3e4c66 55%,#7a889a 85%,#8a98aa 100%);border-radius:5px 5px 0 0;"></div>
<div style="position:absolute;left:600px;top:448px;width:464px;height:30px;background:linear-gradient(90deg,rgba(10,20,40,0.5) 0%,rgba(0,0,0,0) 10%,rgba(200,215,230,0.25) 45%,rgba(0,0,0,0) 60%,rgba(10,20,40,0.4) 100%);border-radius:6px 6px 0 0;"></div>
<div style="position:absolute;left:600px;top:478px;width:7px;height:290px;background:linear-gradient(90deg,#5a6a80 0%,#a8c0e0 20%,#c8daf0 50%,#98b0d0 80%,#404a58 100%);"></div>
<div style="position:absolute;left:1057px;top:478px;width:7px;height:290px;background:linear-gradient(90deg,#c8d0d8 0%,#0a1830 20%,#0c1a34 80%,#8090a0 100%);"></div>
<div style="position:absolute;left:606px;top:453px;width:118px;height:20px;background:rgba(170,185,205,0.55);filter:blur(5px);border-radius:8px"></div>
<div style="position:absolute;left:776px;top:449px;width:10px;height:28px;background:rgba(210,225,245,0.6);filter:blur(3px)"></div>
<div style="position:absolute;left:607px;top:455px;white-space:nowrap;font-size:12px;color:#000;;transform:scaleX(0.95);transform-origin:0 0;">MESM21, Тик&nbsp; 2000</div>
<div style="position:absolute;left:1010px;top:449px;width:49px;height:17px;background:linear-gradient(180deg,#c8d0dc 0%,#8a98b0 35%,#1e2e50 50%,#16264a 100%);border:1px solid #d0d8e4;border-radius:0 0 4px 4px;"><svg width="49" height="17" style="position:absolute;left:-1px;top:-1px"><g stroke="#fff" stroke-width="2.2" stroke-linecap="square"><line x1="21" y1="5" x2="28" y2="11"/><line x1="28" y1="5" x2="21" y2="11"/></g></svg></div>
<div style="position:absolute;left:607px;top:478px;width:450px;height:290px;background:#f0f0f0;"></div>
<div style="position:absolute;left:612px;top:483px;width:84px;height:35px;background:#ff7f50;border:1px solid #8b3a10;display:flex;align-items:center;justify-content:center;text-align:center;line-height:12px;font-size:12px;color:#000;border-width:1px 2px 2px 1px;"><span style="display:inline-block;transform:scaleX(0.93)">Best Sell Limit<br>4228.00</span></div>
<div style="position:absolute;left:707px;top:483px;width:50px;height:20px;background:#ff7f50;border:1px solid #8b3a10;display:flex;align-items:center;justify-content:center;text-align:center;line-height:12px;font-size:12px;color:#000;font-size:13px;"><span style="display:inline-block;transform:scaleX(0.93)">SELL</span></div>
<div style="position:absolute;left:769px;top:483px;width:65px;height:20px;background:#ff7f50;border:1px solid #8b3a10;display:flex;align-items:center;justify-content:center;text-align:center;line-height:12px;font-size:12px;color:#000;font-size:13px;"><span style="display:inline-block;transform:scaleX(0.93)">Delete</span></div>
<div style="position:absolute;left:707px;top:513px;width:50px;height:24px;background:#ff0000;border:1px solid #8b1010;display:flex;align-items:center;justify-content:center;text-align:center;line-height:12px;font-size:12px;color:#000;font-size:12px;"><span style="display:inline-block;transform:scaleX(0.93)"><b>CLOSE</b></span></div>
<div style="position:absolute;left:769px;top:513px;width:65px;height:24px;background:#d4d4d4;border:1px solid #6a6a6a;display:flex;align-items:center;justify-content:center;text-align:center;line-height:12px;font-size:12px;color:#000;font-size:13px;"><span style="display:inline-block;transform:scaleX(0.93)">Delete all</span></div>
<div style="position:absolute;left:612px;top:533px;width:84px;height:35px;background:#1e90ff;border:1px solid #0a2a60;display:flex;align-items:center;justify-content:center;text-align:center;line-height:12px;font-size:12px;color:#000;border-width:2px;"><span style="display:inline-block;transform:scaleX(0.93)">Best Buy Limit<br>4227.75</span></div>
<div style="position:absolute;left:707px;top:547px;width:50px;height:20px;background:#1e90ff;border:1px solid #10408a;display:flex;align-items:center;justify-content:center;text-align:center;line-height:12px;font-size:12px;color:#000;font-size:13px;"><span style="display:inline-block;transform:scaleX(0.93)">BUY</span></div>
<div style="position:absolute;left:769px;top:547px;width:65px;height:20px;background:#1e90ff;border:1px solid #10408a;display:flex;align-items:center;justify-content:center;text-align:center;line-height:12px;font-size:12px;color:#000;font-size:13px;"><span style="display:inline-block;transform:scaleX(0.93)">Delete</span></div>
<div style="position:absolute;left:613px;top:579px;white-space:nowrap;font-size:12px;color:#000;transform:scaleX(0.92);transform-origin:0 0;;">объем ордера</div>
<div style="position:absolute;left:769px;top:578px;width:65px;height:19px;background:#d4d4d4;border:1px solid #6a6a6a;display:flex;align-items:center;justify-content:center;text-align:center;line-height:12px;font-size:12px;color:#000;font-size:12px;padding-top:2px;"><span style="display:inline-block;transform:scaleX(0.93)">Reverse</span></div>
<div style="position:absolute;left:700px;top:577px;width:57px;height:21px;background:#fff;border:1px solid #b8b8b8;"><div style="position:absolute;left:3px;top:2px;font-size:12px;line-height:16px;color:#000">1</div><div style="position:absolute;right:1px;top:1px;width:15px;height:9px;background:linear-gradient(#f8f8f8,#e4e4e4);border:1px solid #c8c8c8;border-radius:2px"></div><div style="position:absolute;right:1px;top:10px;width:15px;height:8px;background:linear-gradient(#f8f8f8,#e4e4e4);border:1px solid #c8c8c8;border-radius:2px"></div><svg width="15" height="21" style="position:absolute;right:1px;top:0"><polygon points="4,8.0 7.5,4.5 11,8.0" fill="#4a6aa8"/><polygon points="4,13.0 7.5,16.5 11,13.0" fill="#4a6aa8"/></svg></div>
<div style="position:absolute;left:612px;top:610px;width:13px;height:13px;background:linear-gradient(135deg,#d8d8d8,#fafafa);border:1px solid #8a8a8a;"><svg width="12" height="12" style="position:absolute;left:-1px;top:-1px"><path d="M3,6 L5,9.5 L10,2" fill="none" stroke="#3a4aa0" stroke-width="1.6"/></svg></div>
<div style="position:absolute;left:629px;top:607px;white-space:nowrap;font-size:12px;color:#000;transform:scaleX(0.92);transform-origin:0 0;;">SL</div>
<div style="position:absolute;left:654px;top:607px;width:65px;height:21px;background:#fff;border:1px solid #b8b8b8;"><div style="position:absolute;left:3px;top:2px;font-size:12px;line-height:16px;color:#000">7</div><div style="position:absolute;right:1px;top:1px;width:15px;height:9px;background:linear-gradient(#f8f8f8,#e4e4e4);border:1px solid #c8c8c8;border-radius:2px"></div><div style="position:absolute;right:1px;top:10px;width:15px;height:8px;background:linear-gradient(#f8f8f8,#e4e4e4);border:1px solid #c8c8c8;border-radius:2px"></div><svg width="15" height="21" style="position:absolute;right:1px;top:0"><polygon points="4,8.0 7.5,4.5 11,8.0" fill="#4a6aa8"/><polygon points="4,13.0 7.5,16.5 11,13.0" fill="#4a6aa8"/></svg></div>
<div style="position:absolute;left:725px;top:610px;width:13px;height:13px;background:linear-gradient(135deg,#d8d8d8,#fafafa);border:1px solid #8a8a8a;"><svg width="12" height="12" style="position:absolute;left:-1px;top:-1px"><path d="M3,6 L5,9.5 L10,2" fill="none" stroke="#3a4aa0" stroke-width="1.6"/></svg></div>
<div style="position:absolute;left:742px;top:607px;white-space:nowrap;font-size:12px;color:#000;transform:scaleX(0.92);transform-origin:0 0;;">TP</div>
<div style="position:absolute;left:769px;top:607px;width:65px;height:21px;background:#fff;border:1px solid #b8b8b8;"><div style="position:absolute;left:3px;top:2px;font-size:12px;line-height:16px;color:#000">5</div><div style="position:absolute;right:1px;top:1px;width:15px;height:9px;background:linear-gradient(#f8f8f8,#e4e4e4);border:1px solid #c8c8c8;border-radius:2px"></div><div style="position:absolute;right:1px;top:10px;width:15px;height:8px;background:linear-gradient(#f8f8f8,#e4e4e4);border:1px solid #c8c8c8;border-radius:2px"></div><svg width="15" height="21" style="position:absolute;right:1px;top:0"><polygon points="4,8.0 7.5,4.5 11,8.0" fill="#4a6aa8"/><polygon points="4,13.0 7.5,16.5 11,13.0" fill="#4a6aa8"/></svg></div>
<div style="position:absolute;left:612px;top:639px;width:222px;height:106px;border:1px solid #d4dce4;border-radius:3px;"></div>
<div style="position:absolute;left:618px;top:631px;white-space:nowrap;font-size:12px;color:#000;transform:scaleX(0.92);transform-origin:0 0;;"><span style="background:#f0f0f0;padding:0 2px">Дельта/Объем</span></div>
<div style="position:absolute;left:619px;top:654px;width:13px;height:13px;border-radius:50%;background:linear-gradient(135deg,#d0d0d0,#fafafa);border:1px solid #8a8a8a;"><div style="position:absolute;left:3px;top:3px;width:5px;height:5px;border-radius:50%;background:radial-gradient(circle at 40% 40%,#8ad0ff,#1a5aa0)"></div></div>
<div style="position:absolute;left:636px;top:653px;white-space:nowrap;font-size:12px;color:#000;transform:scaleX(0.92);transform-origin:0 0;;">покупка</div>
<div style="position:absolute;left:692px;top:653px;width:13px;height:13px;background:linear-gradient(135deg,#d8d8d8,#fafafa);border:1px solid #8a8a8a;"></div>
<div style="position:absolute;left:708px;top:649px;white-space:nowrap;font-size:15px;color:#006400;;"><b>ВКЛЮЧИТЬ</b></div>
<div style="position:absolute;left:619px;top:677px;width:13px;height:13px;border-radius:50%;background:linear-gradient(135deg,#d0d0d0,#fafafa);border:1px solid #8a8a8a;"></div>
<div style="position:absolute;left:636px;top:676px;white-space:nowrap;font-size:12px;color:#000;transform:scaleX(0.92);transform-origin:0 0;;">продажа</div>
<div style="position:absolute;left:692px;top:674px;width:57px;height:20px;background:#fff;border:1px solid #b8b8b8;"><div style="position:absolute;left:3px;top:2px;font-size:12px;line-height:16px;color:#000">5</div><div style="position:absolute;right:1px;top:1px;width:15px;height:9px;background:linear-gradient(#f8f8f8,#e4e4e4);border:1px solid #c8c8c8;border-radius:2px"></div><div style="position:absolute;right:1px;top:10px;width:15px;height:8px;background:linear-gradient(#f8f8f8,#e4e4e4);border:1px solid #c8c8c8;border-radius:2px"></div><svg width="15" height="20" style="position:absolute;right:1px;top:0"><polygon points="4,7.5 7.5,4.0 11,7.5" fill="#4a6aa8"/><polygon points="4,12.5 7.5,16.0 11,12.5" fill="#4a6aa8"/></svg></div>
<div style="position:absolute;left:751px;top:676px;white-space:nowrap;font-size:12px;color:#000;transform:scaleX(0.92);transform-origin:0 0;;">таймер, сек</div>
<div style="position:absolute;left:619px;top:701px;width:13px;height:13px;background:linear-gradient(135deg,#d8d8d8,#fafafa);border:1px solid #8a8a8a;"></div>
<div style="position:absolute;left:636px;top:700px;white-space:nowrap;font-size:12px;color:#000;transform:scaleX(0.92);transform-origin:0 0;;">использовать линию</div>
<div style="position:absolute;left:760px;top:701px;width:13px;height:13px;background:linear-gradient(135deg,#d8d8d8,#fafafa);border:1px solid #8a8a8a;"><svg width="12" height="12" style="position:absolute;left:-1px;top:-1px"><path d="M3,6 L5,9.5 L10,2" fill="none" stroke="#3a4aa0" stroke-width="1.6"/></svg></div>
<div style="position:absolute;left:777px;top:700px;white-space:nowrap;font-size:12px;color:#000;transform:scaleX(0.92);transform-origin:0 0;;">лимит</div>
<div style="position:absolute;left:619px;top:720px;width:42px;height:20px;background:#fff;border:1px solid #b8b8b8;"><div style="position:absolute;left:3px;top:2px;font-size:12px;line-height:16px;color:#000">1</div><div style="position:absolute;right:1px;top:1px;width:15px;height:9px;background:linear-gradient(#f8f8f8,#e4e4e4);border:1px solid #c8c8c8;border-radius:2px"></div><div style="position:absolute;right:1px;top:10px;width:15px;height:8px;background:linear-gradient(#f8f8f8,#e4e4e4);border:1px solid #c8c8c8;border-radius:2px"></div><svg width="15" height="20" style="position:absolute;right:1px;top:0"><polygon points="4,7.5 7.5,4.0 11,7.5" fill="#4a6aa8"/><polygon points="4,12.5 7.5,16.0 11,12.5" fill="#4a6aa8"/></svg></div>
<div style="position:absolute;left:667px;top:722px;white-space:nowrap;font-size:12px;color:#000;transform:scaleX(0.92);transform-origin:0 0;;">допуск по сигналу в тиках</div>
<div style="position:absolute;left:619px;top:751px;width:13px;height:13px;background:linear-gradient(135deg,#d8d8d8,#fafafa);border:1px solid #8a8a8a;"></div>
<div style="position:absolute;left:636px;top:750px;white-space:nowrap;font-size:12px;color:#000;transform:scaleX(0.92);transform-origin:0 0;;">комбинированный сигнал Дельта/Объем и Имбаланс</div>
<div style="position:absolute;left:841px;top:490px;width:210px;height:115px;border:1px solid #d4dce4;border-radius:3px;"></div>
<div style="position:absolute;left:847px;top:482px;white-space:nowrap;font-size:12px;color:#000;transform:scaleX(0.92);transform-origin:0 0;;"><span style="background:#f0f0f0;padding:0 2px">Лимитный ордер</span></div>
<div style="position:absolute;left:846px;top:501px;width:13px;height:13px;background:linear-gradient(135deg,#d8d8d8,#fafafa);border:1px solid #8a8a8a;"><svg width="12" height="12" style="position:absolute;left:-1px;top:-1px"><path d="M3,6 L5,9.5 L10,2" fill="none" stroke="#3a4aa0" stroke-width="1.6"/></svg></div>
<div style="position:absolute;left:863px;top:499px;white-space:nowrap;font-size:12px;color:#000;transform:scaleX(0.92);transform-origin:0 0;;">отменяется, если цена ушла на</div>
<div style="position:absolute;left:846px;top:517px;width:57px;height:20px;background:#fff;border:1px solid #b8b8b8;"><div style="position:absolute;left:3px;top:2px;font-size:12px;line-height:16px;color:#000">5</div><div style="position:absolute;right:1px;top:1px;width:15px;height:9px;background:linear-gradient(#f8f8f8,#e4e4e4);border:1px solid #c8c8c8;border-radius:2px"></div><div style="position:absolute;right:1px;top:10px;width:15px;height:8px;background:linear-gradient(#f8f8f8,#e4e4e4);border:1px solid #c8c8c8;border-radius:2px"></div><svg width="15" height="20" style="position:absolute;right:1px;top:0"><polygon points="4,7.5 7.5,4.0 11,7.5" fill="#4a6aa8"/><polygon points="4,12.5 7.5,16.0 11,12.5" fill="#4a6aa8"/></svg></div>
<div style="position:absolute;left:911px;top:519px;white-space:nowrap;font-size:12px;color:#000;transform:scaleX(0.92);transform-origin:0 0;;">тиков</div>
<div style="position:absolute;left:846px;top:544px;width:13px;height:13px;background:linear-gradient(135deg,#d8d8d8,#fafafa);border:1px solid #8a8a8a;"></div>
<div style="position:absolute;left:863px;top:542px;white-space:nowrap;font-size:12px;color:#000;transform:scaleX(0.92);transform-origin:0 0;;">передвигается на</div>
<div style="position:absolute;left:963px;top:539px;width:42px;height:20px;background:#fff;border:1px solid #b8b8b8;"><div style="position:absolute;left:3px;top:2px;font-size:12px;line-height:16px;color:#000">0</div><div style="position:absolute;right:1px;top:1px;width:15px;height:9px;background:linear-gradient(#f8f8f8,#e4e4e4);border:1px solid #c8c8c8;border-radius:2px"></div><div style="position:absolute;right:1px;top:10px;width:15px;height:8px;background:linear-gradient(#f8f8f8,#e4e4e4);border:1px solid #c8c8c8;border-radius:2px"></div><svg width="15" height="20" style="position:absolute;right:1px;top:0"><polygon points="4,7.5 7.5,4.0 11,7.5" fill="#4a6aa8"/><polygon points="4,12.5 7.5,16.0 11,12.5" fill="#4a6aa8"/></svg></div>
<div style="position:absolute;left:1012px;top:542px;white-space:nowrap;font-size:12px;color:#000;transform:scaleX(0.92);transform-origin:0 0;;">тиков</div>
<div style="position:absolute;left:847px;top:564px;white-space:nowrap;font-size:12px;color:#000;transform:scaleX(0.92);transform-origin:0 0;;">если цена прошла</div>
<div style="position:absolute;left:949px;top:562px;width:47px;height:19px;background:#fff;border:1px solid #b8b8b8;"><div style="position:absolute;left:3px;top:1px;font-size:12px;line-height:16px;color:#000">0</div><div style="position:absolute;right:1px;top:1px;width:15px;height:8px;background:linear-gradient(#f8f8f8,#e4e4e4);border:1px solid #c8c8c8;border-radius:2px"></div><div style="position:absolute;right:1px;top:9px;width:15px;height:7px;background:linear-gradient(#f8f8f8,#e4e4e4);border:1px solid #c8c8c8;border-radius:2px"></div><svg width="15" height="19" style="position:absolute;right:1px;top:0"><polygon points="4,7.0 7.5,3.5 11,7.0" fill="#4a6aa8"/><polygon points="4,12.0 7.5,15.5 11,12.0" fill="#4a6aa8"/></svg></div>
<div style="position:absolute;left:1001px;top:564px;white-space:nowrap;font-size:12px;color:#000;transform:scaleX(0.92);transform-origin:0 0;;">тиков и</div>
<div style="position:absolute;left:847px;top:585px;white-space:nowrap;font-size:12px;color:#000;transform:scaleX(0.92);transform-origin:0 0;;">прошло не более</div>
<div style="position:absolute;left:949px;top:583px;width:58px;height:20px;background:#fff;border:1px solid #b8b8b8;"><div style="position:absolute;left:3px;top:2px;font-size:12px;line-height:16px;color:#000">0</div><div style="position:absolute;right:1px;top:1px;width:15px;height:9px;background:linear-gradient(#f8f8f8,#e4e4e4);border:1px solid #c8c8c8;border-radius:2px"></div><div style="position:absolute;right:1px;top:10px;width:15px;height:8px;background:linear-gradient(#f8f8f8,#e4e4e4);border:1px solid #c8c8c8;border-radius:2px"></div><svg width="15" height="20" style="position:absolute;right:1px;top:0"><polygon points="4,7.5 7.5,4.0 11,7.5" fill="#4a6aa8"/><polygon points="4,12.5 7.5,16.0 11,12.5" fill="#4a6aa8"/></svg></div>
<div style="position:absolute;left:1015px;top:585px;white-space:nowrap;font-size:12px;color:#000;transform:scaleX(0.92);transform-origin:0 0;;">сек.</div>
<div style="position:absolute;left:849px;top:612px;width:13px;height:13px;background:linear-gradient(135deg,#d8d8d8,#fafafa);border:1px solid #8a8a8a;"><svg width="12" height="12" style="position:absolute;left:-1px;top:-1px"><path d="M3,6 L5,9.5 L10,2" fill="none" stroke="#3a4aa0" stroke-width="1.6"/></svg></div>
<div style="position:absolute;left:866px;top:611px;white-space:nowrap;font-size:12px;color:#000;transform:scaleX(0.92);transform-origin:0 0;;">тейкпрофит лимитным ордером</div>
<div style="position:absolute;left:841px;top:639px;width:210px;height:106px;border:1px solid #d4dce4;border-radius:3px;"></div>
<div style="position:absolute;left:847px;top:631px;white-space:nowrap;font-size:12px;color:#000;transform:scaleX(0.92);transform-origin:0 0;;"><span style="background:#f0f0f0;padding:0 2px">Имбаланс</span></div>
<div style="position:absolute;left:848px;top:651px;width:13px;height:13px;border-radius:50%;background:linear-gradient(135deg,#d0d0d0,#fafafa);border:1px solid #8a8a8a;"><div style="position:absolute;left:3px;top:3px;width:5px;height:5px;border-radius:50%;background:radial-gradient(circle at 40% 40%,#8ad0ff,#1a5aa0)"></div></div>
<div style="position:absolute;left:865px;top:650px;white-space:nowrap;font-size:12px;color:#000;transform:scaleX(0.92);transform-origin:0 0;;">покупка</div>
<div style="position:absolute;left:922px;top:651px;width:13px;height:13px;background:linear-gradient(135deg,#d8d8d8,#fafafa);border:1px solid #8a8a8a;"></div>
<div style="position:absolute;left:938px;top:647px;white-space:nowrap;font-size:15px;color:#006400;;"><b>ВКЛЮЧИТЬ</b></div>
<div style="position:absolute;left:848px;top:676px;width:13px;height:13px;border-radius:50%;background:linear-gradient(135deg,#d0d0d0,#fafafa);border:1px solid #8a8a8a;"></div>
<div style="position:absolute;left:865px;top:675px;white-space:nowrap;font-size:12px;color:#000;transform:scaleX(0.92);transform-origin:0 0;;">продажа</div>
<div style="position:absolute;left:921px;top:674px;width:57px;height:19px;background:#fff;border:1px solid #b8b8b8;"><div style="position:absolute;left:3px;top:1px;font-size:12px;line-height:16px;color:#000">5</div><div style="position:absolute;right:1px;top:1px;width:15px;height:8px;background:linear-gradient(#f8f8f8,#e4e4e4);border:1px solid #c8c8c8;border-radius:2px"></div><div style="position:absolute;right:1px;top:9px;width:15px;height:7px;background:linear-gradient(#f8f8f8,#e4e4e4);border:1px solid #c8c8c8;border-radius:2px"></div><svg width="15" height="19" style="position:absolute;right:1px;top:0"><polygon points="4,7.0 7.5,3.5 11,7.0" fill="#4a6aa8"/><polygon points="4,12.0 7.5,15.5 11,12.0" fill="#4a6aa8"/></svg></div>
<div style="position:absolute;left:982px;top:676px;white-space:nowrap;font-size:12px;color:#000;transform:scaleX(0.92);transform-origin:0 0;;">таймер, сек</div>
<div style="position:absolute;left:848px;top:701px;width:13px;height:13px;background:linear-gradient(135deg,#d8d8d8,#fafafa);border:1px solid #8a8a8a;"></div>
<div style="position:absolute;left:865px;top:700px;white-space:nowrap;font-size:12px;color:#000;transform:scaleX(0.92);transform-origin:0 0;;">использовать линию</div>
<div style="position:absolute;left:991px;top:701px;width:13px;height:13px;background:linear-gradient(135deg,#d8d8d8,#fafafa);border:1px solid #8a8a8a;"><svg width="12" height="12" style="position:absolute;left:-1px;top:-1px"><path d="M3,6 L5,9.5 L10,2" fill="none" stroke="#3a4aa0" stroke-width="1.6"/></svg></div>
<div style="position:absolute;left:1008px;top:700px;white-space:nowrap;font-size:12px;color:#000;transform:scaleX(0.92);transform-origin:0 0;;">лимит</div>
<div style="position:absolute;left:849px;top:720px;width:42px;height:20px;background:#fff;border:1px solid #b8b8b8;"><div style="position:absolute;left:3px;top:2px;font-size:12px;line-height:16px;color:#000">1</div><div style="position:absolute;right:1px;top:1px;width:15px;height:9px;background:linear-gradient(#f8f8f8,#e4e4e4);border:1px solid #c8c8c8;border-radius:2px"></div><div style="position:absolute;right:1px;top:10px;width:15px;height:8px;background:linear-gradient(#f8f8f8,#e4e4e4);border:1px solid #c8c8c8;border-radius:2px"></div><svg width="15" height="20" style="position:absolute;right:1px;top:0"><polygon points="4,7.5 7.5,4.0 11,7.5" fill="#4a6aa8"/><polygon points="4,12.5 7.5,16.0 11,12.5" fill="#4a6aa8"/></svg></div>
<div style="position:absolute;left:898px;top:722px;white-space:nowrap;font-size:12px;color:#000;transform:scaleX(0.92);transform-origin:0 0;;">допуск по сигналу в тиках</div>
</body></html>
